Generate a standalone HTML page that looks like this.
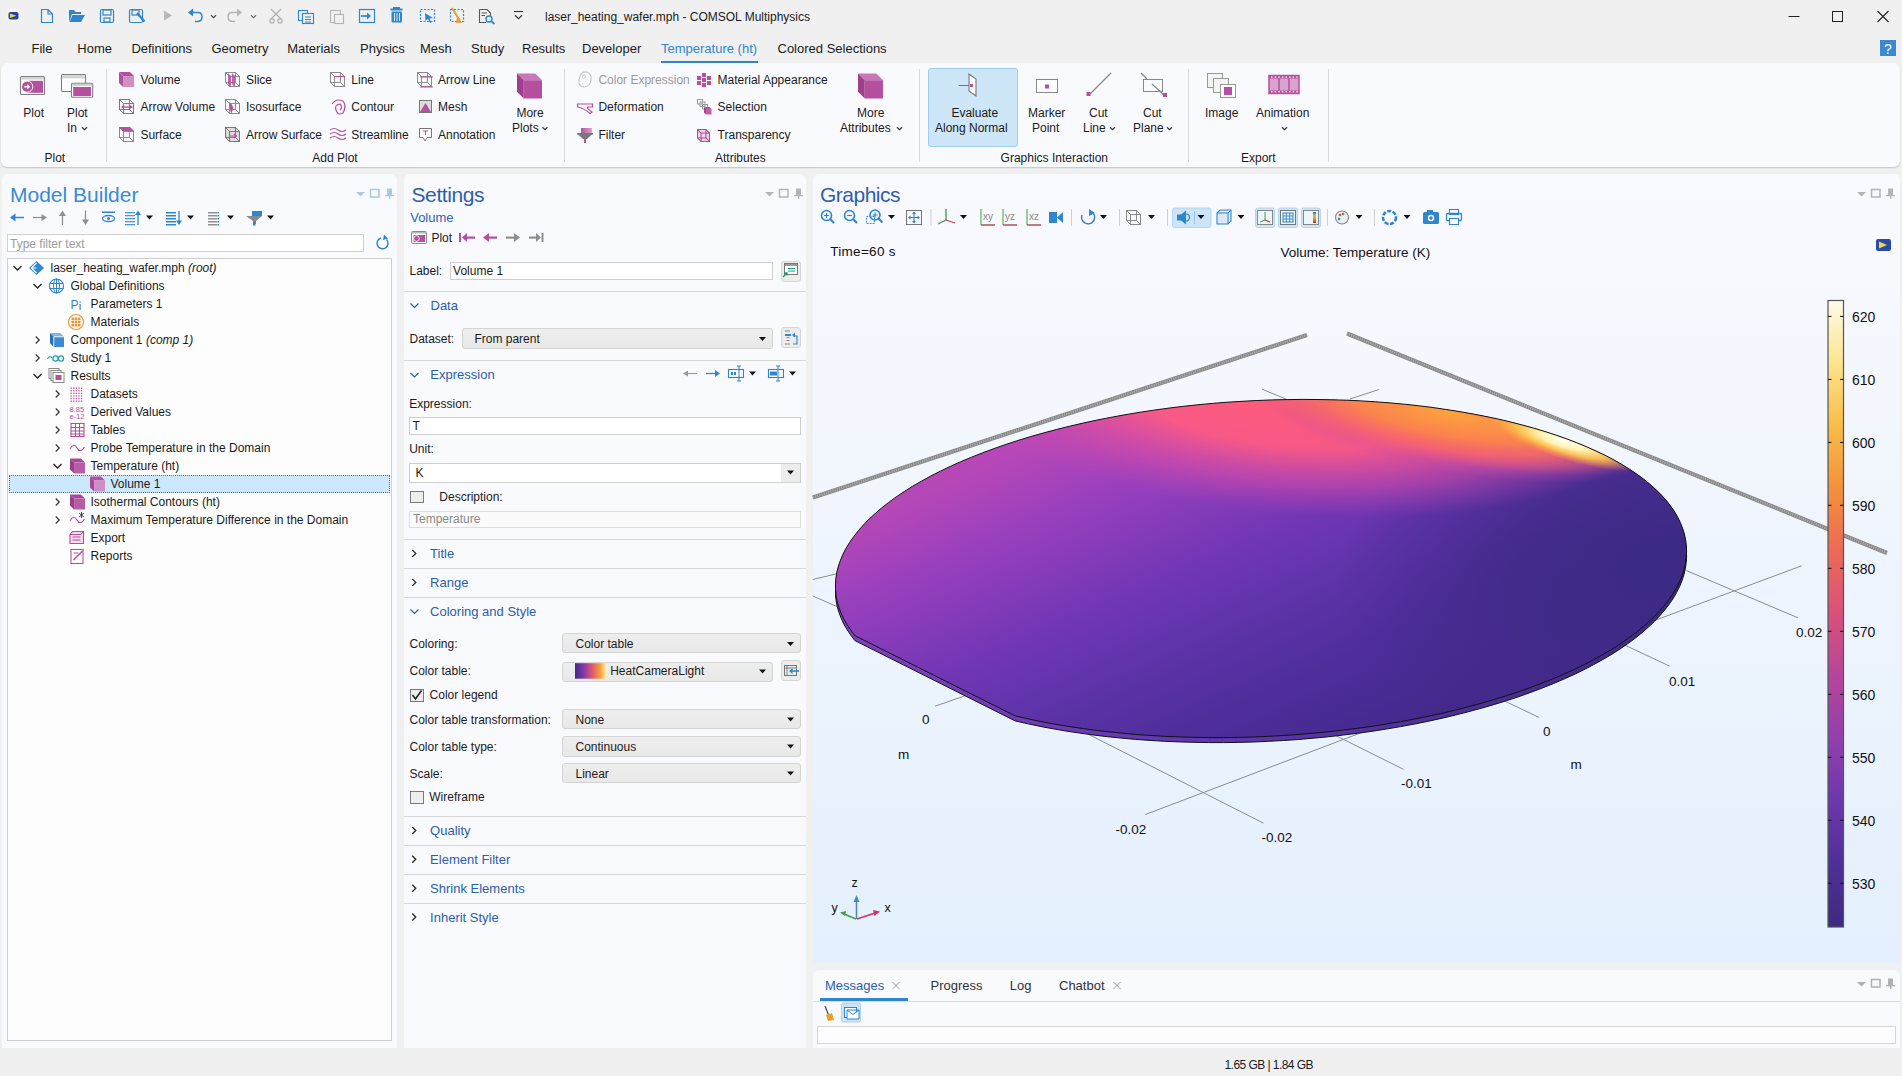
<!DOCTYPE html>
<html><head><meta charset="utf-8"><style>
html,body{margin:0;padding:0;}
body{width:1902px;height:1076px;overflow:hidden;position:relative;background:#f0f0f0;font-family:"Liberation Sans",sans-serif;}
.t{position:absolute;white-space:nowrap;}
.r{position:absolute;box-sizing:border-box;}
.s{position:absolute;overflow:visible;}
</style></head><body>
<div class="t" style="left:545.0px;top:11.1px;font-size:12px;line-height:12px;color:#1b1b1b;">laser_heating_wafer.mph - COMSOL Multiphysics</div>
<svg class="s" style="left:0px;top:0px;" width="30" height="30" viewBox="0 0 30 30"><circle cx="13.5" cy="15.5" r="7" fill="#f5f5f5"/><rect x="8.5" y="12" width="10" height="7.5" rx="2" fill="#2440a8"/><path d="M10,13.5 L16.5,15.8 L10,18 Z" fill="#e8d640"/></svg>
<svg class="s" style="left:0px;top:0px;" width="600" height="32" viewBox="0 0 600 32"><path d="M41.5,9.5 L48,9.5 L52.5,14 L52.5,22.5 L41.5,22.5 Z M48,9.5 L48,14 L52.5,14" fill="none" stroke="#2f86cc" stroke-width="1.2"/><path d="M69,10 L74,10 L75.5,12 L81,12 L81,14 L72,14 L69,22 Z" fill="#2f86cc"/><path d="M72.5,15 L85,15 L81,22 L69.5,22 Z" fill="#2f86cc"/><rect x="100.5" y="9.5" width="13" height="13" rx="1.5" fill="none" stroke="#2f86cc" stroke-width="1.2"/><rect x="103" y="10" width="8" height="5" fill="none" stroke="#2f86cc" stroke-width="1.2"/><rect x="104" y="18" width="6" height="4" fill="none" stroke="#2f86cc" stroke-width="1.2"/><rect x="129.5" y="9.5" width="13" height="13" rx="1.5" fill="none" stroke="#2f86cc" stroke-width="1.2"/><rect x="132" y="10" width="7" height="5" fill="none" stroke="#2f86cc" stroke-width="1.2"/><path d="M137,13 L144.5,21.5" stroke="#2f86cc" stroke-width="2.4"/><path d="M164,10.5 L172,15.5 L164,20.5 Z" fill="#b9b9b9"/><path d="M190,12.5 L198,12.5 Q202,12.5 202,17 Q202,21.5 197,21.5 L195,21.5" fill="none" stroke="#2f86cc" stroke-width="1.5"/><path d="M188,12.5 L193,8.5 L193,16.5 Z" fill="#2f86cc"/><path d="M211.0,15.25 L213.5,17.75 L216.0,15.25" fill="none" stroke="#444" stroke-width="1.1"/><path d="M240,12.5 L232,12.5 Q228,12.5 228,17 Q228,21.5 233,21.5 L235,21.5" fill="none" stroke="#b5b5b5" stroke-width="1.5"/><path d="M242,12.5 L237,8.5 L237,16.5 Z" fill="#b5b5b5"/><path d="M251.0,15.25 L253.5,17.75 L256.0,15.25" fill="none" stroke="#666" stroke-width="1.1"/><path d="M271,9 L281,19 M281,9 L271,19" stroke="#b0b0b0" stroke-width="1.3"/><circle cx="272" cy="21" r="2.2" fill="none" stroke="#b0b0b0" stroke-width="1.2"/><circle cx="280" cy="21" r="2.2" fill="none" stroke="#b0b0b0" stroke-width="1.2"/><rect x="298.5" y="10.5" width="9" height="10" fill="none" stroke="#2f86cc" stroke-width="1.1"/><rect x="302.5" y="13.5" width="11" height="10" fill="#f0f0f0" stroke="#2f86cc" stroke-width="1.1"/><path d="M305,17 L311,17 M305,19.5 L311,19.5 M305,22 L311,22" stroke="#2f86cc" stroke-width="1"/><rect x="330.5" y="10.5" width="10" height="12" fill="none" stroke="#b5b5b5" stroke-width="1.1"/><rect x="334.5" y="14.5" width="9" height="9" fill="#f0f0f0" stroke="#b5b5b5" stroke-width="1.1"/><rect x="359.5" y="9.5" width="15" height="13" fill="none" stroke="#2f86cc" stroke-width="1.2"/><path d="M361,16 L369,16" stroke="#2f86cc" stroke-width="1.8"/><path d="M367,12.5 L371,16 L367,19.5 Z" fill="#2f86cc"/><rect x="390.5" y="8.5" width="12" height="2" fill="#2f86cc"/><rect x="393" y="7" width="7" height="2" fill="#2f86cc"/><rect x="391.5" y="11.5" width="10.5" height="11" rx="1" fill="#2f86cc"/><path d="M394.5,13 L394.5,21 M397,13 L397,21 M399.5,13 L399.5,21" stroke="#f0f0f0" stroke-width="0.9"/><rect x="420.5" y="9.5" width="14" height="12" fill="none" stroke="#2f86cc" stroke-width="1.2" stroke-dasharray="2,1.5"/><path d="M425,13 L433,18 L429.5,18.5 L431.5,22.5 L430,23 L428,19 L425.5,21 Z" fill="#2f86cc"/><rect x="450.5" y="9.5" width="13" height="12" fill="none" stroke="#2f86cc" stroke-width="1.2" stroke-dasharray="2,1.5"/><path d="M452,8 L460,21" stroke="#e0a040" stroke-width="2"/><path d="M457,17 L462,23 L456,23 Z" fill="#e8a040"/><path d="M479.5,9.5 L487,9.5 L490.5,13 L490.5,17 M479.5,9.5 L479.5,22.5 L486,22.5" fill="none" stroke="#555" stroke-width="1.1"/><path d="M481.5,13 L487,13 M481.5,15.5 L485,15.5" stroke="#555" stroke-width="1"/><circle cx="489" cy="19" r="3" fill="none" stroke="#2f86cc" stroke-width="1.4"/><path d="M491,21 L494.5,24" stroke="#2f86cc" stroke-width="1.8"/><path d="M514,11.5 L523,11.5" stroke="#333" stroke-width="1.1"/><path d="M515.0,15.25 L518.5,18.75 L522.0,15.25" fill="none" stroke="#333" stroke-width="1.1"/></svg>
<svg class="s" style="left:1780px;top:0px;" width="122" height="32" viewBox="0 0 122 32"><path d="M8.5,16.5 L19.5,16.5" stroke="#222" stroke-width="1"/><rect x="52.5" y="11.5" width="10" height="10" fill="none" stroke="#222" stroke-width="1"/><path d="M97.5,11 L108.5,22 M108.5,11 L97.5,22" stroke="#222" stroke-width="1.1"/></svg>
<svg class="s" style="left:1879px;top:39px;" width="18" height="18" viewBox="0 0 18 18"><rect x="1" y="1" width="16" height="16" fill="#3b8ad0"/><text x="9" y="14.5" font-size="14" font-family="Liberation Sans" fill="#fff" text-anchor="middle">?</text></svg>
<div class="t" style="left:31.5px;top:41.8px;font-size:13px;line-height:13px;color:#1b1b1b;">File</div>
<div class="t" style="left:77.3px;top:41.8px;font-size:13px;line-height:13px;color:#1b1b1b;">Home</div>
<div class="t" style="left:131.4px;top:41.8px;font-size:13px;line-height:13px;color:#1b1b1b;">Definitions</div>
<div class="t" style="left:211.4px;top:41.8px;font-size:13px;line-height:13px;color:#1b1b1b;">Geometry</div>
<div class="t" style="left:287.2px;top:41.8px;font-size:13px;line-height:13px;color:#1b1b1b;">Materials</div>
<div class="t" style="left:360.0px;top:41.8px;font-size:13px;line-height:13px;color:#1b1b1b;">Physics</div>
<div class="t" style="left:420.0px;top:41.8px;font-size:13px;line-height:13px;color:#1b1b1b;">Mesh</div>
<div class="t" style="left:471.0px;top:41.8px;font-size:13px;line-height:13px;color:#1b1b1b;">Study</div>
<div class="t" style="left:522.0px;top:41.8px;font-size:13px;line-height:13px;color:#1b1b1b;">Results</div>
<div class="t" style="left:582.0px;top:41.8px;font-size:13px;line-height:13px;color:#1b1b1b;">Developer</div>
<div class="t" style="left:661.0px;top:41.8px;font-size:13px;line-height:13px;color:#2f86cc;">Temperature (ht)</div>
<div class="t" style="left:777.5px;top:41.8px;font-size:13px;line-height:13px;color:#1b1b1b;">Colored Selections</div>
<div class="r" style="left:661.0px;top:60.5px;width:97.0px;height:2.5px;background:#2f86cc"></div>
<div class="r" style="left:1.0px;top:63.0px;width:1898.5px;height:104.0px;background:#f9fafe;border-radius:6px;box-shadow:0 1px 1.5px rgba(0,0,0,0.18)"></div>
<div class="r" style="left:106.0px;top:69.0px;width:1.0px;height:93.0px;background:#d9d9d9"></div>
<div class="r" style="left:564.0px;top:69.0px;width:1.0px;height:93.0px;background:#d9d9d9"></div>
<div class="r" style="left:919.0px;top:69.0px;width:1.0px;height:93.0px;background:#d9d9d9"></div>
<div class="r" style="left:1188.0px;top:69.0px;width:1.0px;height:93.0px;background:#d9d9d9"></div>
<div class="r" style="left:1328.0px;top:69.0px;width:1.0px;height:93.0px;background:#d9d9d9"></div>
<div class="t" style="left:44.5px;top:151.5px;font-size:12px;line-height:12px;color:#1b1b1b;">Plot</div>
<div class="t" style="left:312.3px;top:151.5px;font-size:12px;line-height:12px;color:#1b1b1b;">Add Plot</div>
<div class="t" style="left:715.0px;top:151.5px;font-size:12px;line-height:12px;color:#1b1b1b;">Attributes</div>
<div class="t" style="left:1000.6px;top:151.5px;font-size:12px;line-height:12px;color:#1b1b1b;">Graphics Interaction</div>
<div class="t" style="left:1241.0px;top:151.5px;font-size:12px;line-height:12px;color:#1b1b1b;">Export</div>
<div class="t" style="left:23.3px;top:106.6px;font-size:12px;line-height:12px;color:#1b1b1b;">Plot</div>
<div class="t" style="left:67.0px;top:106.6px;font-size:12px;line-height:12px;color:#1b1b1b;">Plot</div>
<div class="t" style="left:67.0px;top:121.6px;font-size:12px;line-height:12px;color:#1b1b1b;">In</div>
<div class="t" style="left:516.4px;top:106.6px;font-size:12px;line-height:12px;color:#1b1b1b;">More</div>
<div class="t" style="left:512.0px;top:121.6px;font-size:12px;line-height:12px;color:#1b1b1b;">Plots</div>
<div class="t" style="left:857.0px;top:106.6px;font-size:12px;line-height:12px;color:#1b1b1b;">More</div>
<div class="t" style="left:840.0px;top:121.6px;font-size:12px;line-height:12px;color:#1b1b1b;">Attributes</div>
<div class="r" style="left:927.5px;top:67.5px;width:90.5px;height:79.0px;background:#cde6f8;border:1px solid #9fcdf0;border-radius:3px"></div>
<div class="t" style="left:951.4px;top:106.8px;font-size:12px;line-height:12px;color:#1b1b1b;">Evaluate</div>
<div class="t" style="left:935.0px;top:121.6px;font-size:12px;line-height:12px;color:#1b1b1b;">Along Normal</div>
<div class="t" style="left:1028.0px;top:106.8px;font-size:12px;line-height:12px;color:#1b1b1b;">Marker</div>
<div class="t" style="left:1032.0px;top:121.6px;font-size:12px;line-height:12px;color:#1b1b1b;">Point</div>
<div class="t" style="left:1089.0px;top:106.8px;font-size:12px;line-height:12px;color:#1b1b1b;">Cut</div>
<div class="t" style="left:1083.0px;top:121.6px;font-size:12px;line-height:12px;color:#1b1b1b;">Line</div>
<div class="t" style="left:1143.0px;top:106.8px;font-size:12px;line-height:12px;color:#1b1b1b;">Cut</div>
<div class="t" style="left:1133.0px;top:121.6px;font-size:12px;line-height:12px;color:#1b1b1b;">Plane</div>
<div class="t" style="left:1205.0px;top:106.8px;font-size:12px;line-height:12px;color:#1b1b1b;">Image</div>
<div class="t" style="left:1256.0px;top:106.8px;font-size:12px;line-height:12px;color:#1b1b1b;">Animation</div>
<div class="t" style="left:140.4px;top:73.8px;font-size:12px;line-height:12px;color:#1b1b1b;">Volume</div>
<div class="t" style="left:140.4px;top:100.6px;font-size:12px;line-height:12px;color:#1b1b1b;">Arrow Volume</div>
<div class="t" style="left:140.4px;top:129.2px;font-size:12px;line-height:12px;color:#1b1b1b;">Surface</div>
<div class="t" style="left:246.0px;top:73.8px;font-size:12px;line-height:12px;color:#1b1b1b;">Slice</div>
<div class="t" style="left:246.0px;top:100.6px;font-size:12px;line-height:12px;color:#1b1b1b;">Isosurface</div>
<div class="t" style="left:246.0px;top:129.2px;font-size:12px;line-height:12px;color:#1b1b1b;">Arrow Surface</div>
<div class="t" style="left:351.3px;top:73.8px;font-size:12px;line-height:12px;color:#1b1b1b;">Line</div>
<div class="t" style="left:351.3px;top:100.6px;font-size:12px;line-height:12px;color:#1b1b1b;">Contour</div>
<div class="t" style="left:351.3px;top:129.2px;font-size:12px;line-height:12px;color:#1b1b1b;">Streamline</div>
<div class="t" style="left:438.0px;top:73.8px;font-size:12px;line-height:12px;color:#1b1b1b;">Arrow Line</div>
<div class="t" style="left:438.0px;top:100.6px;font-size:12px;line-height:12px;color:#1b1b1b;">Mesh</div>
<div class="t" style="left:438.0px;top:129.2px;font-size:12px;line-height:12px;color:#1b1b1b;">Annotation</div>
<div class="t" style="left:717.6px;top:73.8px;font-size:12px;line-height:12px;color:#1b1b1b;">Material Appearance</div>
<div class="t" style="left:717.6px;top:100.6px;font-size:12px;line-height:12px;color:#1b1b1b;">Selection</div>
<div class="t" style="left:717.6px;top:129.2px;font-size:12px;line-height:12px;color:#1b1b1b;">Transparency</div>
<div class="t" style="left:598.4px;top:100.6px;font-size:12px;line-height:12px;color:#1b1b1b;">Deformation</div>
<div class="t" style="left:598.4px;top:129.2px;font-size:12px;line-height:12px;color:#1b1b1b;">Filter</div>
<div class="t" style="left:598.4px;top:73.8px;font-size:12px;line-height:12px;color:#9a9a9a;">Color Expression</div>
<svg class="s" style="left:0px;top:0px;" width="1400" height="170" viewBox="0 0 1400 170"><path d="M82.0,127.25 L84.5,129.75 L87.0,127.25" fill="none" stroke="#333" stroke-width="1.2"/><path d="M542.5,127.25 L545,129.75 L547.5,127.25" fill="none" stroke="#333" stroke-width="1.2"/><path d="M897.0,127.25 L899.5,129.75 L902.0,127.25" fill="none" stroke="#333" stroke-width="1.2"/><path d="M1110.0,127.25 L1112.5,129.75 L1115.0,127.25" fill="none" stroke="#333" stroke-width="1.2"/><path d="M1167.0,127.25 L1169.5,129.75 L1172.0,127.25" fill="none" stroke="#333" stroke-width="1.2"/><path d="M1282.0,127.25 L1284.5,129.75 L1287.0,127.25" fill="none" stroke="#333" stroke-width="1.2"/><rect x="20.5" y="76.5" width="24" height="18" rx="1" fill="#fff" stroke="#808080" stroke-width="1.1"/><rect x="21.2" y="77.2" width="22.6" height="2.3" fill="#d2d2d2"/><rect x="27" y="80.8" width="16" height="12" fill="#b4509e"/><circle cx="27.2" cy="86.7" r="5.6" fill="#b4509e" stroke="#fff" stroke-width="1"/><path d="M24.3,86.7 L28.6,86.7" stroke="#fff" stroke-width="1.6"/><path d="M27.4,84 L30.3,86.7 L27.4,89.4 Z" fill="#fff"/><rect x="61.5" y="74.5" width="24" height="17" rx="1" fill="#fff" stroke="#808080" stroke-width="1.1"/><rect x="62.2" y="75.2" width="22.6" height="3.2" fill="#d2d2d2"/><rect x="71.5" y="83.3" width="21.2" height="14" rx="1" fill="#fff" stroke="#808080" stroke-width="1.1"/><rect x="72.2" y="84" width="19.8" height="2" fill="#d2d2d2"/><rect x="73.2" y="87" width="17.8" height="9" fill="#b4509e"/><path d="M517,73.5 L535.25,73.5 L542,80.25 L523.75,80.25 Z" fill="#c878b8"/><path d="M517,73.5 L523.75,80.25 L523.75,98.5 L517,91.75 Z" fill="#9e3f8c"/><rect x="523.75" y="80.25" width="18.25" height="18.25" fill="#b4509e"/><path d="M858,73.5 L876.25,73.5 L883,80.25 L864.75,80.25 Z" fill="#c878b8"/><path d="M858,73.5 L864.75,80.25 L864.75,98.5 L858,91.75 Z" fill="#9e3f8c"/><rect x="864.75" y="80.25" width="18.25" height="18.25" fill="#b4509e"/><path d="M119,72 L129.95,72 L134,76.05 L123.05,76.05 Z" fill="#b4509e"/><path d="M119,72 L123.05,76.05 L123.05,87 L119,82.95 Z" fill="#b4509e"/><rect x="123.05" y="76.05" width="10.95" height="10.95" fill="#cf8fc3"/><g fill="none" stroke="#7a7a7a" stroke-width="1"><rect x="119.5" y="99.5" width="9.95" height="9.95"/><rect x="123.55" y="103.55" width="9.95" height="9.95"/><path d="M119.5,99.5 L123.55,103.55 M129.45,99.5 L133.5,103.55 M119.5,109.45 L123.55,113.5 M129.45,109.45 L133.5,113.5"/></g><path d="M122,107 L132,107" stroke="#b4509e" stroke-width="1.3"/><path d="M121,107 L124,105 L124,109 Z M133,107 L130,105 L130,109 Z" fill="#b4509e"/><g fill="none" stroke="#8a8a8a" stroke-width="1"><rect x="119.5" y="127.5" width="9.95" height="9.95"/><rect x="123.55" y="131.55" width="9.95" height="9.95"/><path d="M119.5,127.5 L123.55,131.55 M129.45,127.5 L133.5,131.55 M119.5,137.45 L123.55,141.5 M129.45,137.45 L133.5,141.5"/></g><path d="M119,127 L130,127 L134,131 L123,131 Z" fill="#b4509e"/><g fill="none" stroke="#8a8a8a" stroke-width="1"><rect x="225.5" y="72.5" width="9.95" height="9.95"/><rect x="229.55" y="76.55" width="9.95" height="9.95"/><path d="M225.5,72.5 L229.55,76.55 M235.45,72.5 L239.5,76.55 M225.5,82.45 L229.55,86.5 M235.45,82.45 L239.5,86.5"/></g><path d="M228,73 L231,76 L231,87 L228,84 Z M232,73 L235,76 L235,87 L232,84 Z" fill="#b4509e" opacity="0.85"/><g fill="none" stroke="#8a8a8a" stroke-width="1"><rect x="225.5" y="99.5" width="9.95" height="9.95"/><rect x="229.55" y="103.55" width="9.95" height="9.95"/><path d="M225.5,99.5 L229.55,103.55 M235.45,99.5 L239.5,103.55 M225.5,109.45 L229.55,113.5 M235.45,109.45 L239.5,113.5"/></g><path d="M229,102 Q236,106 231,114 Z" fill="#b4509e"/><path d="M225,127 L236,127 L240,131 L240,142 L229,142 L225,138 Z" fill="#dedede"/><g fill="none" stroke="#777" stroke-width="1"><rect x="225.5" y="127.5" width="9.95" height="9.95"/><rect x="229.55" y="131.55" width="9.95" height="9.95"/><path d="M225.5,127.5 L229.55,131.55 M235.45,127.5 L239.5,131.55 M225.5,137.45 L229.55,141.5 M235.45,137.45 L239.5,141.5"/></g><path d="M230,136 L236,136 M234,134 L236.5,136 L234,138" stroke="#b4509e" stroke-width="1.2" fill="none"/><g fill="none" stroke="#8a8a8a" stroke-width="1"><rect x="330.5" y="72.5" width="9.95" height="9.95"/><rect x="334.55" y="76.55" width="9.95" height="9.95"/><path d="M330.5,72.5 L334.55,76.55 M340.45,72.5 L344.5,76.55 M330.5,82.45 L334.55,86.5 M340.45,82.45 L344.5,86.5"/></g><path d="M334,76.5 L345,76.5" stroke="#b4509e" stroke-width="1.2"/><path d="M332,104 Q336,98 343,101 Q347,106 343,113 Q338,116 336,110 Q334,105 340,104 Q343,107 340,110" fill="none" stroke="#b4509e" stroke-width="1.2"/><path d="M330,130 Q334,127 338,130 Q342,133 346,130 M330,134 Q334,131 338,134 Q342,137 346,134 M330,138 Q334,135 338,138 Q342,141 346,138" fill="none" stroke="#b4509e" stroke-width="1.2"/><g fill="none" stroke="#8a8a8a" stroke-width="1"><rect x="417.5" y="72.5" width="9.95" height="9.95"/><rect x="421.55" y="76.55" width="9.95" height="9.95"/><path d="M417.5,72.5 L421.55,76.55 M427.45,72.5 L431.5,76.55 M417.5,82.45 L421.55,86.5 M427.45,82.45 L431.5,86.5"/></g><path d="M420,77 L433,77 M420,87 L433,87" stroke="#b4509e" stroke-width="1.1"/><rect x="419.5" y="100.5" width="12" height="12" fill="#ddd" stroke="#777"/><path d="M420,112 L425.5,103 L431,112 Z" fill="#b4509e"/><path d="M419.5,128.5 L431.5,128.5 L431.5,137.5 L427,137.5 L425,141 L423,137.5 L419.5,137.5 Z" fill="#fff" stroke="#777"/><path d="M423,131 L428,131 M425.5,131 L425.5,135" stroke="#b4509e" stroke-width="1.1"/><path d="M580,76 Q582,71 587,72 Q592,74 591,80 Q590,86 585,87 Q579,87 579,82 Q579,79 580,76 Z" fill="none" stroke="#c9c9c9" stroke-width="1.2"/><circle cx="584" cy="76.5" r="1.6" fill="none" stroke="#c9c9c9"/><path d="M582,84 L588,79" stroke="#c9c9c9" stroke-width="0.9" stroke-dasharray="1,1"/><path d="M577.5,104 L592.5,104 L592.5,107 L588,107 Q586,108 592,112 L590,113.5 Q584,108 577.5,107 Z" fill="none" stroke="#b4509e" stroke-width="1.2"/><defs><linearGradient id="flt" x1="0" x2="1"><stop offset="0" stop-color="#b4509e"/><stop offset="1" stop-color="#dba8d0"/></linearGradient></defs><rect x="581" y="128" width="11" height="5" fill="url(#flt)"/><path d="M577,133.5 L593,133.5 L587,139 L583,139 Z" fill="#787878"/><rect x="577" y="133" width="16" height="1.6" fill="#787878"/><rect x="584" y="139" width="2" height="4" fill="#b4509e"/><rect x="697" y="76" width="4" height="4" fill="#b4509e"/><rect x="697" y="81" width="4" height="4" fill="#b4509e"/><rect x="702" y="73" width="4" height="4" fill="#b4509e"/><rect x="702" y="78" width="4" height="4" fill="#b4509e"/><rect x="702" y="83" width="4" height="4" fill="#b4509e"/><rect x="707" y="76" width="4" height="4" fill="#b4509e"/><rect x="707" y="81" width="4" height="4" fill="#b4509e"/><g fill="none" stroke="#9a9a9a" stroke-width="1"><rect x="697.5" y="99.5" width="5" height="4.5"/><rect x="700" y="102" width="5" height="4.5"/><rect x="702.5" y="104.5" width="5" height="4.5"/></g><path d="M704,107 L709.475,107 L711.5,109.025 L706.025,109.025 Z" fill="#b4509e"/><path d="M704,107 L706.025,109.025 L706.025,114.5 L704,112.475 Z" fill="#9e3f8c"/><rect x="706.025" y="109.025" width="5.475" height="5.475" fill="#c060aa"/><path d="M697.5,129.5 L706,129.5 L709.5,133 L709.5,141.5 L701,141.5 L697.5,138 Z" fill="#f2dcea"/><g fill="none" stroke="#b4509e" stroke-width="1.1"><rect x="697.55" y="129.55" width="8.39" height="8.39"/><rect x="701.06" y="133.06" width="8.39" height="8.39"/><path d="M697.55,129.55 L701.06,133.06 M705.94,129.55 L709.45,133.06 M697.55,137.94 L701.06,141.45 M705.94,137.94 L709.45,141.45"/></g><path d="M958.5,85.5 L971,85.5" stroke="#777" stroke-width="1"/><path d="M969,74 L976,79 L976,96 L969,91 Z" fill="#fff" stroke="#777" stroke-width="1.1"/><rect x="970" y="84" width="3" height="3" fill="#b4509e"/><rect x="1036.5" y="79.5" width="21" height="13" fill="#fff" stroke="#888"/><rect x="1045" y="84.5" width="4" height="4" fill="#b4509e"/><path d="M1089,95 L1111,73" stroke="#888" stroke-width="1.2"/><rect x="1086.5" y="92" width="4" height="4" fill="#b4509e"/><path d="M1141,73 L1147,79" stroke="#888" stroke-width="1.2"/><rect x="1143.5" y="79.5" width="19" height="12" fill="none" stroke="#888"/><path d="M1152,84 L1164,95" stroke="#888" stroke-width="1.2"/><rect x="1163" y="93" width="4" height="4" fill="#b4509e"/><rect x="1207.5" y="73.5" width="15" height="14" fill="#f4f4f4" stroke="#999"/><rect x="1213.5" y="78.5" width="15" height="14" fill="#f4f4f4" stroke="#999"/><rect x="1220.5" y="84.5" width="15" height="13" fill="#fff" stroke="#999"/><rect x="1224" y="87" width="8" height="8" fill="#b4509e"/><rect x="1269" y="75.5" width="30" height="18" fill="#d9a3cf"/><rect x="1269" y="75.5" width="30" height="3" fill="#b4509e"/><rect x="1269" y="90.5" width="30" height="3" fill="#b4509e"/><path d="M1279,78 L1279,91 M1289,78 L1289,91" stroke="#b4509e" stroke-width="1.5"/><rect x="1269" y="75.5" width="30" height="18" fill="none" stroke="#b4509e" stroke-width="1.5"/><rect x="1271.0" y="76.5" width="1.6" height="1.2" fill="#fff"/><rect x="1271.0" y="91.2" width="1.6" height="1.2" fill="#fff"/><rect x="1274.6" y="76.5" width="1.6" height="1.2" fill="#fff"/><rect x="1274.6" y="91.2" width="1.6" height="1.2" fill="#fff"/><rect x="1278.2" y="76.5" width="1.6" height="1.2" fill="#fff"/><rect x="1278.2" y="91.2" width="1.6" height="1.2" fill="#fff"/><rect x="1281.8" y="76.5" width="1.6" height="1.2" fill="#fff"/><rect x="1281.8" y="91.2" width="1.6" height="1.2" fill="#fff"/><rect x="1285.4" y="76.5" width="1.6" height="1.2" fill="#fff"/><rect x="1285.4" y="91.2" width="1.6" height="1.2" fill="#fff"/><rect x="1289.0" y="76.5" width="1.6" height="1.2" fill="#fff"/><rect x="1289.0" y="91.2" width="1.6" height="1.2" fill="#fff"/><rect x="1292.6" y="76.5" width="1.6" height="1.2" fill="#fff"/><rect x="1292.6" y="91.2" width="1.6" height="1.2" fill="#fff"/><rect x="1296.2" y="76.5" width="1.6" height="1.2" fill="#fff"/><rect x="1296.2" y="91.2" width="1.6" height="1.2" fill="#fff"/></svg>
<div class="r" style="left:2.0px;top:174.0px;width:395.0px;height:874.0px;background:#f9fafe;border-radius:6px 6px 0 0"></div>
<div class="t" style="left:10.0px;top:184.0px;font-size:21px;line-height:21px;color:#3a8ad4;">Model Builder</div>
<svg class="s" style="left:0px;top:0px;" width="400" height="260" viewBox="0 0 400 260"><path d="M356,192 L365,192 L360.5,196.5 Z" fill="#a9c9e6"/><rect x="370.5" y="189.5" width="8.5" height="7.5" fill="none" stroke="#a9c9e6" stroke-width="1.5"/><rect x="387" y="188.5" width="5" height="6.5" fill="#a9c9e6"/><rect x="385" y="195" width="9" height="1.3" fill="#a9c9e6"/><rect x="389" y="195" width="1.3" height="4" fill="#a9c9e6"/><path d="M11,217.5 L24,217.5" stroke="#2f86cc" stroke-width="1.5"/><path d="M10,217.5 L15.5,213.5 L15.5,221.5 Z" fill="#2f86cc"/><path d="M33,217.5 L46,217.5" stroke="#8f8f8f" stroke-width="1.2"/><path d="M47,217.5 L41.5,214 L41.5,221 Z" fill="#8f8f8f"/><path d="M62.5,212 L62.5,225" stroke="#8f8f8f" stroke-width="1.2"/><path d="M62.5,210.5 L59,216 L66,216 Z" fill="#8f8f8f"/><path d="M85.5,210.5 L85.5,223" stroke="#8f8f8f" stroke-width="1.2"/><path d="M85.5,225 L82,219.5 L89,219.5 Z" fill="#8f8f8f"/><rect x="102" y="211.5" width="13" height="1.5" fill="#2f86cc"/><ellipse cx="108.5" cy="218.5" rx="6" ry="3" fill="none" stroke="#2f86cc" stroke-width="1.3"/><circle cx="108.5" cy="218.5" r="1.5" fill="#2f86cc"/><rect x="125" y="212" width="10" height="1.3" fill="#2f86cc" opacity="0.85"/><rect x="125" y="215" width="10" height="1.3" fill="#2f86cc" opacity="0.85"/><rect x="125" y="218" width="10" height="1.3" fill="#2f86cc" opacity="0.85"/><rect x="125" y="221" width="10" height="1.3" fill="#2f86cc" opacity="0.85"/><rect x="125" y="224" width="10" height="1.3" fill="#2f86cc" opacity="0.85"/><path d="M138,212 L138,225" stroke="#2f86cc" stroke-width="1.3"/><path d="M138,210.5 L135,215 L141,215 Z" fill="#2f86cc"/><path d="M146.0,215.5 L153.0,215.5 L149.5,219.5 Z" fill="#111"/><rect x="166" y="212" width="10" height="1.5" fill="#2f86cc"/><rect x="166" y="215" width="10" height="1.5" fill="#2f86cc"/><rect x="166" y="218" width="10" height="1.5" fill="#2f86cc"/><rect x="166" y="221" width="10" height="1.5" fill="#2f86cc"/><rect x="166" y="224" width="10" height="1.5" fill="#2f86cc"/><path d="M179,211 L179,223" stroke="#2f86cc" stroke-width="1.3"/><path d="M179,225 L176,220.5 L182,220.5 Z" fill="#2f86cc"/><path d="M187.0,215.5 L194.0,215.5 L190.5,219.5 Z" fill="#111"/><rect x="208" y="212" width="9" height="1.5" fill="#8f8f8f"/><rect x="217.5" y="212" width="1.5" height="1.5" fill="#2f86cc"/><rect x="208" y="215" width="9" height="1.5" fill="#8f8f8f"/><rect x="217.5" y="215" width="1.5" height="1.5" fill="#2f86cc"/><rect x="208" y="218" width="9" height="1.5" fill="#8f8f8f"/><rect x="217.5" y="218" width="1.5" height="1.5" fill="#2f86cc"/><rect x="208" y="221" width="9" height="1.5" fill="#8f8f8f"/><rect x="217.5" y="221" width="1.5" height="1.5" fill="#2f86cc"/><rect x="208" y="224" width="9" height="1.5" fill="#8f8f8f"/><rect x="217.5" y="224" width="1.5" height="1.5" fill="#2f86cc"/><path d="M227.0,215.5 L234.0,215.5 L230.5,219.5 Z" fill="#111"/><rect x="252" y="211" width="10" height="5" fill="#2f86cc"/><path d="M246,216 L262,216 L256,221 L256,224 L253,224 L253,221 Z" fill="#8a8a8a"/><rect x="253" y="221.5" width="2.5" height="4" fill="#2f86cc"/><path d="M267.0,215.5 L274.0,215.5 L270.5,219.5 Z" fill="#111"/><path d="M386.5,239.5 A5.5,5.5 0 1 1 381,238" fill="none" stroke="#2f86cc" stroke-width="1.5"/><path d="M384,234.5 L388,238.5 L383,240 Z" fill="#2f86cc"/></svg>
<div class="r" style="left:7.0px;top:234.0px;width:357.0px;height:18.0px;background:#fff;border:1px solid #d0d0d0"></div>
<div class="t" style="left:10.0px;top:237.8px;font-size:12px;line-height:12px;color:#9c9c9c;">Type filter text</div>
<div class="r" style="left:7.0px;top:258.0px;width:385.0px;height:782.6px;background:#fdfdfd;border:1px solid #cfcfcf"></div>
<div class="r" style="left:9.0px;top:475.0px;width:381.0px;height:18.0px;background:#cce8ff;border:1px dotted #4a6a8a"></div>
<div class="t" style="left:50.5px;top:261.6px;font-size:12px;line-height:12px;color:#1b1b1b;">laser_heating_wafer.mph <i>(root)</i></div>
<div class="t" style="left:70.5px;top:279.6px;font-size:12px;line-height:12px;color:#1b1b1b;">Global Definitions</div>
<div class="t" style="left:90.5px;top:297.6px;font-size:12px;line-height:12px;color:#1b1b1b;">Parameters 1</div>
<div class="t" style="left:90.5px;top:315.6px;font-size:12px;line-height:12px;color:#1b1b1b;">Materials</div>
<div class="t" style="left:70.5px;top:333.6px;font-size:12px;line-height:12px;color:#1b1b1b;">Component 1 <i>(comp 1)</i></div>
<div class="t" style="left:70.5px;top:351.6px;font-size:12px;line-height:12px;color:#1b1b1b;">Study 1</div>
<div class="t" style="left:70.5px;top:369.6px;font-size:12px;line-height:12px;color:#1b1b1b;">Results</div>
<div class="t" style="left:90.5px;top:387.6px;font-size:12px;line-height:12px;color:#1b1b1b;">Datasets</div>
<div class="t" style="left:90.5px;top:405.6px;font-size:12px;line-height:12px;color:#1b1b1b;">Derived Values</div>
<div class="t" style="left:90.5px;top:423.6px;font-size:12px;line-height:12px;color:#1b1b1b;">Tables</div>
<div class="t" style="left:90.5px;top:441.6px;font-size:12px;line-height:12px;color:#1b1b1b;">Probe Temperature in the Domain</div>
<div class="t" style="left:90.5px;top:459.6px;font-size:12px;line-height:12px;color:#1b1b1b;">Temperature (ht)</div>
<div class="t" style="left:110.5px;top:477.6px;font-size:12px;line-height:12px;color:#1b1b1b;">Volume 1</div>
<div class="t" style="left:90.5px;top:495.6px;font-size:12px;line-height:12px;color:#1b1b1b;">Isothermal Contours (ht)</div>
<div class="t" style="left:90.5px;top:513.6px;font-size:12px;line-height:12px;color:#1b1b1b;">Maximum Temperature Difference in the Domain</div>
<div class="t" style="left:90.5px;top:531.6px;font-size:12px;line-height:12px;color:#1b1b1b;">Export</div>
<div class="t" style="left:90.5px;top:549.6px;font-size:12px;line-height:12px;color:#1b1b1b;">Reports</div>
<svg class="s" style="left:0px;top:0px;" width="400" height="580" viewBox="0 0 400 580"><path d="M13.5,266.0 L17.5,270.0 L21.5,266.0" fill="none" stroke="#222" stroke-width="1.3"/><path d="M29.0,268 L36.5,261 L44.0,268 L36.5,275 Z" fill="#2f86cc"/><path d="M36.5,263 L31.5,268 L36.5,273" fill="none" stroke="#fff" stroke-width="1.2"/><path d="M31.5,268 L36.5,268" stroke="#fff" stroke-width="1"/><path d="M33.5,284.0 L37.5,288.0 L41.5,284.0" fill="none" stroke="#222" stroke-width="1.3"/><circle cx="56.5" cy="286" r="7" fill="none" stroke="#2f86cc" stroke-width="1.2"/><ellipse cx="56.5" cy="286" rx="3" ry="7" fill="none" stroke="#2f86cc" stroke-width="1"/><path d="M49.5,283.5 L63.5,283.5 M49.5,288.5 L63.5,288.5 M56.5,279 L56.5,293" stroke="#2f86cc" stroke-width="1"/><text x="70.5" y="309" font-size="12" font-family="Liberation Sans" fill="#2f86cc">P</text><rect x="79.5" y="304" width="1.2" height="6" fill="#2f86cc"/><rect x="79.5" y="301.5" width="1.2" height="1.3" fill="#2f86cc"/><circle cx="76.0" cy="322" r="7.5" fill="none" stroke="#e49a3a" stroke-width="1.2"/><rect x="71.5" y="317.5" width="2.6" height="2.6" fill="#e49a3a"/><rect x="71.5" y="320.7" width="2.6" height="2.6" fill="#e49a3a"/><rect x="71.5" y="323.9" width="2.6" height="2.6" fill="#e49a3a"/><rect x="74.7" y="317.5" width="2.6" height="2.6" fill="#e49a3a"/><rect x="74.7" y="320.7" width="2.6" height="2.6" fill="#e49a3a"/><rect x="74.7" y="323.9" width="2.6" height="2.6" fill="#e49a3a"/><rect x="77.9" y="317.5" width="2.6" height="2.6" fill="#e49a3a"/><rect x="77.9" y="320.7" width="2.6" height="2.6" fill="#e49a3a"/><rect x="77.9" y="323.9" width="2.6" height="2.6" fill="#e49a3a"/><path d="M35.75,336.5 L39.25,340 L35.75,343.5" fill="none" stroke="#333" stroke-width="1.2"/><path d="M50.0,333 L60.22,333 L64.0,336.78 L53.78,336.78 Z" fill="#7fb6e6"/><path d="M50.0,333 L53.78,336.78 L53.78,347 L50.0,343.22 Z" fill="#2a6fb8"/><rect x="53.78" y="336.78" width="10.219999999999999" height="10.219999999999999" fill="#3a8ad4"/><path d="M53.8,336.8 L64.0,336.8 M53.8,336.8 L53.8,347" stroke="#fff" stroke-width="0.8"/><path d="M35.75,354.5 L39.25,358 L35.75,361.5" fill="none" stroke="#333" stroke-width="1.2"/><path d="M47.5,359 Q49.5,355 52.0,358" fill="none" stroke="#20a0b0" stroke-width="1.2"/><circle cx="55.5" cy="358.5" r="2.6" fill="none" stroke="#20a0b0" stroke-width="1.2"/><circle cx="61.0" cy="358.5" r="2.6" fill="none" stroke="#20a0b0" stroke-width="1.2"/><path d="M33.5,374.0 L37.5,378.0 L41.5,374.0" fill="none" stroke="#222" stroke-width="1.3"/><rect x="49.0" y="368.5" width="10" height="10" fill="#fff" stroke="#888"/><rect x="51.0" y="370.5" width="10" height="10" fill="#fff" stroke="#888"/><rect x="53.0" y="372.5" width="11" height="10" fill="#fff" stroke="#888"/><rect x="55.5" y="375" width="6" height="5" fill="#b4509e"/><path d="M55.75,390.5 L59.25,394 L55.75,397.5" fill="none" stroke="#333" stroke-width="1.2"/><rect x="70.5" y="387.5" width="1.3" height="1.3" fill="#b4509e"/><rect x="70.5" y="390.1" width="1.3" height="1.3" fill="#b4509e"/><rect x="70.5" y="392.7" width="1.3" height="1.3" fill="#b4509e"/><rect x="70.5" y="395.3" width="1.3" height="1.3" fill="#b4509e"/><rect x="70.5" y="397.9" width="1.3" height="1.3" fill="#b4509e"/><rect x="70.5" y="400.5" width="1.3" height="1.3" fill="#b4509e"/><rect x="73.1" y="387.5" width="1.3" height="1.3" fill="#b4509e"/><rect x="73.1" y="390.1" width="1.3" height="1.3" fill="#b4509e"/><rect x="73.1" y="392.7" width="1.3" height="1.3" fill="#b4509e"/><rect x="73.1" y="395.3" width="1.3" height="1.3" fill="#b4509e"/><rect x="73.1" y="397.9" width="1.3" height="1.3" fill="#b4509e"/><rect x="73.1" y="400.5" width="1.3" height="1.3" fill="#b4509e"/><rect x="75.7" y="387.5" width="1.3" height="1.3" fill="#b4509e"/><rect x="75.7" y="390.1" width="1.3" height="1.3" fill="#b4509e"/><rect x="75.7" y="392.7" width="1.3" height="1.3" fill="#b4509e"/><rect x="75.7" y="395.3" width="1.3" height="1.3" fill="#b4509e"/><rect x="75.7" y="397.9" width="1.3" height="1.3" fill="#b4509e"/><rect x="75.7" y="400.5" width="1.3" height="1.3" fill="#b4509e"/><rect x="78.3" y="387.5" width="1.3" height="1.3" fill="#b4509e"/><rect x="78.3" y="390.1" width="1.3" height="1.3" fill="#b4509e"/><rect x="78.3" y="392.7" width="1.3" height="1.3" fill="#b4509e"/><rect x="78.3" y="395.3" width="1.3" height="1.3" fill="#b4509e"/><rect x="78.3" y="397.9" width="1.3" height="1.3" fill="#b4509e"/><rect x="78.3" y="400.5" width="1.3" height="1.3" fill="#b4509e"/><rect x="80.9" y="387.5" width="1.3" height="1.3" fill="#b4509e"/><rect x="80.9" y="390.1" width="1.3" height="1.3" fill="#b4509e"/><rect x="80.9" y="392.7" width="1.3" height="1.3" fill="#b4509e"/><rect x="80.9" y="395.3" width="1.3" height="1.3" fill="#b4509e"/><rect x="80.9" y="397.9" width="1.3" height="1.3" fill="#b4509e"/><rect x="80.9" y="400.5" width="1.3" height="1.3" fill="#b4509e"/><path d="M55.75,408.5 L59.25,412 L55.75,415.5" fill="none" stroke="#333" stroke-width="1.2"/><text x="69.5" y="411.5" font-size="7.5" font-family="Liberation Sans" fill="#b4509e">8.85</text><text x="69.5" y="418.5" font-size="7.5" font-family="Liberation Sans" fill="#b4509e">e-12</text><path d="M55.75,426.5 L59.25,430 L55.75,433.5" fill="none" stroke="#333" stroke-width="1.2"/><rect x="71.0" y="423.5" width="13" height="13" fill="none" stroke="#b4509e" stroke-width="1.1"/><path d="M71.0,427.5 L84.0,427.5 M71.0,431 L84.0,431 M71.0,434 L84.0,434 M75.5,423.5 L75.5,436.5 M79.5,423.5 L79.5,436.5" stroke="#b4509e" stroke-width="1"/><path d="M55.75,444.5 L59.25,448 L55.75,451.5" fill="none" stroke="#333" stroke-width="1.2"/><path d="M70.0,449 Q73.5,442 77.0,448 Q80.5,454 84.5,447" fill="none" stroke="#b4509e" stroke-width="1.2"/><path d="M53.5,464.0 L57.5,468.0 L61.5,464.0" fill="none" stroke="#222" stroke-width="1.3"/><path d="M70.0,458.5 L80.95,458.5 L85.0,462.55 L74.05,462.55 Z" fill="#a8489a"/><path d="M70.0,458.5 L74.05,462.55 L74.05,473.5 L70.0,469.45 Z" fill="#9c3f8c"/><rect x="74.05" y="462.55" width="10.95" height="10.95" fill="#b85ca6"/><path d="M90.0,476.5 L100.95,476.5 L105.0,480.55 L94.05,480.55 Z" fill="#b4509e"/><path d="M90.0,476.5 L94.05,480.55 L94.05,491.5 L90.0,487.45 Z" fill="#a8489a"/><rect x="94.05" y="480.55" width="10.95" height="10.95" fill="#cf8fc3"/><path d="M55.75,498.5 L59.25,502 L55.75,505.5" fill="none" stroke="#333" stroke-width="1.2"/><path d="M70.0,494.5 L80.95,494.5 L85.0,498.55 L74.05,498.55 Z" fill="#a8489a"/><path d="M70.0,494.5 L74.05,498.55 L74.05,509.5 L70.0,505.45 Z" fill="#9c3f8c"/><rect x="74.05" y="498.55" width="10.95" height="10.95" fill="#b85ca6"/><path d="M55.75,516.5 L59.25,520 L55.75,523.5" fill="none" stroke="#333" stroke-width="1.2"/><path d="M70.0,521 Q73.5,514 77.0,520 Q80.5,526 84.5,519" fill="none" stroke="#b4509e" stroke-width="1.2"/><path d="M79.0,513 L84.0,517 M84.0,513 L79.0,517 M81.5,512 L81.5,518" stroke="#333" stroke-width="0.9"/><path d="M70.0,534.5 L72.5,531.5 L83.5,531.5 L83.5,543.5 L70.0,543.5 Z" fill="#f3dced" stroke="#b4509e" stroke-width="1.1"/><path d="M70.0,534.5 L81.0,534.5 L83.5,531.5 M72.5,537 L80.5,537 M72.5,540 L80.5,540" fill="none" stroke="#b4509e" stroke-width="1"/><rect x="71.0" y="549.5" width="12" height="14" fill="#fff" stroke="#b4509e" stroke-width="1.1"/><path d="M73.5,560 L82.5,551" stroke="#b4509e" stroke-width="1.6"/><path d="M73.5,553 L78.5,553" stroke="#b4509e" stroke-width="1"/></svg>
<div class="r" style="left:403.5px;top:174.0px;width:402.6px;height:874.0px;background:#f9fafe;border-radius:6px 6px 0 0"></div>
<div class="t" style="left:411.5px;top:184.0px;font-size:21px;line-height:21px;color:#2f5eab;letter-spacing:-0.4px">Settings</div>
<div class="t" style="left:410.2px;top:211.0px;font-size:13px;line-height:13px;color:#3461b0;">Volume</div>
<div class="t" style="left:431.4px;top:232.3px;font-size:12px;line-height:12px;color:#1b1b1b;">Plot</div>
<div class="t" style="left:409.5px;top:264.8px;font-size:12px;line-height:12px;color:#1b1b1b;">Label:</div>
<div class="r" style="left:450.0px;top:262.0px;width:323.0px;height:18.0px;background:#fff;border:1px solid #cfcfcf"></div>
<div class="t" style="left:453.1px;top:264.8px;font-size:12px;line-height:12px;color:#1b1b1b;">Volume 1</div>
<div class="r" style="left:781.0px;top:260.5px;width:20.0px;height:21.0px;background:#ececec;border:1px solid #d6d6d6;border-radius:3px"></div>
<div class="r" style="left:404.0px;top:291.0px;width:402.0px;height:1.3px;background:#d8d8d8"></div>
<div class="t" style="left:430.5px;top:299.0px;font-size:13px;line-height:13px;color:#2c5ea8;">Data</div>
<div class="t" style="left:409.5px;top:332.8px;font-size:12px;line-height:12px;color:#1b1b1b;">Dataset:</div>
<div class="r" style="left:461.5px;top:328.0px;width:311.5px;height:20.5px;background:linear-gradient(#eeeeee,#e8e8e8);border:1px solid #d4d4d4;border-radius:3px"></div>
<div class="t" style="left:474.4px;top:333.1px;font-size:12px;line-height:12px;color:#1b1b1b;">From parent</div>
<div class="r" style="left:781.0px;top:327.0px;width:20.0px;height:21.0px;background:#ececec;border:1px solid #d6d6d6;border-radius:3px"></div>
<div class="r" style="left:404.0px;top:360.0px;width:402.0px;height:1.3px;background:#d8d8d8"></div>
<div class="t" style="left:430.3px;top:368.2px;font-size:13px;line-height:13px;color:#2c5ea8;">Expression</div>
<div class="t" style="left:409.2px;top:398.0px;font-size:12px;line-height:12px;color:#1b1b1b;">Expression:</div>
<div class="r" style="left:409.0px;top:417.0px;width:392.0px;height:17.5px;background:#fff;border:1px solid #cfcfcf"></div>
<div class="t" style="left:412.5px;top:420.1px;font-size:12px;line-height:12px;color:#1b1b1b;">T</div>
<div class="t" style="left:409.2px;top:442.6px;font-size:12px;line-height:12px;color:#1b1b1b;">Unit:</div>
<div class="r" style="left:409.0px;top:463.0px;width:392.0px;height:19.5px;background:#fff;border:1px solid #cfcfcf"></div>
<div class="r" style="left:781.0px;top:464.0px;width:19.0px;height:17.5px;background:#ececec"></div>
<div class="t" style="left:415.4px;top:466.8px;font-size:12px;line-height:12px;color:#1b1b1b;">K</div>
<div class="r" style="left:410.0px;top:490.5px;width:14.0px;height:12.5px;background:#eeeeee;border:1px solid #7a7a7a"></div>
<div class="t" style="left:439.3px;top:491.3px;font-size:12px;line-height:12px;color:#1b1b1b;">Description:</div>
<div class="r" style="left:409.0px;top:510.5px;width:392.0px;height:17.0px;background:#fbfbfb;border:1px solid #dedede"></div>
<div class="t" style="left:413.0px;top:513.0px;font-size:12px;line-height:12px;color:#8a8a8a;">Temperature</div>
<div class="r" style="left:404.0px;top:539.0px;width:402.0px;height:1.3px;background:#d8d8d8"></div>
<div class="t" style="left:430.1px;top:546.9px;font-size:13px;line-height:13px;color:#2c5ea8;">Title</div>
<div class="r" style="left:404.0px;top:568.0px;width:402.0px;height:1.3px;background:#d8d8d8"></div>
<div class="t" style="left:430.1px;top:575.9px;font-size:13px;line-height:13px;color:#2c5ea8;">Range</div>
<div class="r" style="left:404.0px;top:597.0px;width:402.0px;height:1.3px;background:#d8d8d8"></div>
<div class="t" style="left:430.1px;top:604.8px;font-size:13px;line-height:13px;color:#2c5ea8;">Coloring and Style</div>
<div class="t" style="left:409.5px;top:638.4px;font-size:12px;line-height:12px;color:#1b1b1b;">Coloring:</div>
<div class="r" style="left:562.4px;top:633.3px;width:238.3px;height:20.2px;background:linear-gradient(#eeeeee,#e8e8e8);border:1px solid #d4d4d4;border-radius:3px"></div>
<div class="t" style="left:575.5px;top:637.7px;font-size:12px;line-height:12px;color:#1b1b1b;">Color table</div>
<div class="t" style="left:409.5px;top:665.4px;font-size:12px;line-height:12px;color:#1b1b1b;">Color table:</div>
<div class="r" style="left:562.4px;top:661.5px;width:210.3px;height:20.0px;background:linear-gradient(#eeeeee,#e8e8e8);border:1px solid #d4d4d4;border-radius:3px"></div>
<div class="t" style="left:610.2px;top:664.7px;font-size:12px;line-height:12px;color:#1b1b1b;">HeatCameraLight</div>
<div class="r" style="left:781.3px;top:660.3px;width:19.4px;height:21.1px;background:#ececec;border:1px solid #d6d6d6;border-radius:3px"></div>
<div class="r" style="left:410.3px;top:689.4px;width:13.5px;height:12.2px;background:#eeeeee;border:1px solid #7a7a7a"></div>
<div class="t" style="left:429.6px;top:689.1px;font-size:12px;line-height:12px;color:#1b1b1b;">Color legend</div>
<div class="t" style="left:409.5px;top:713.7px;font-size:12px;line-height:12px;color:#1b1b1b;">Color table transformation:</div>
<div class="r" style="left:562.4px;top:709.3px;width:238.3px;height:20.1px;background:linear-gradient(#eeeeee,#e8e8e8);border:1px solid #d4d4d4;border-radius:3px"></div>
<div class="t" style="left:575.5px;top:713.7px;font-size:12px;line-height:12px;color:#1b1b1b;">None</div>
<div class="t" style="left:409.5px;top:741.2px;font-size:12px;line-height:12px;color:#1b1b1b;">Color table type:</div>
<div class="r" style="left:562.4px;top:736.4px;width:238.3px;height:20.2px;background:linear-gradient(#eeeeee,#e8e8e8);border:1px solid #d4d4d4;border-radius:3px"></div>
<div class="t" style="left:575.5px;top:740.7px;font-size:12px;line-height:12px;color:#1b1b1b;">Continuous</div>
<div class="t" style="left:409.5px;top:767.8px;font-size:12px;line-height:12px;color:#1b1b1b;">Scale:</div>
<div class="r" style="left:562.4px;top:763.4px;width:238.3px;height:19.8px;background:linear-gradient(#eeeeee,#e8e8e8);border:1px solid #d4d4d4;border-radius:3px"></div>
<div class="t" style="left:575.5px;top:767.5px;font-size:12px;line-height:12px;color:#1b1b1b;">Linear</div>
<div class="r" style="left:410.0px;top:791.2px;width:13.5px;height:12.4px;background:#eeeeee;border:1px solid #7a7a7a"></div>
<div class="t" style="left:429.3px;top:790.6px;font-size:12px;line-height:12px;color:#1b1b1b;">Wireframe</div>
<div class="r" style="left:404.0px;top:816.0px;width:402.0px;height:1.3px;background:#d8d8d8"></div>
<div class="t" style="left:430.1px;top:824.0px;font-size:13px;line-height:13px;color:#2c5ea8;">Quality</div>
<div class="r" style="left:404.0px;top:845.0px;width:402.0px;height:1.3px;background:#d8d8d8"></div>
<div class="t" style="left:430.1px;top:852.8px;font-size:13px;line-height:13px;color:#2c5ea8;">Element Filter</div>
<div class="r" style="left:404.0px;top:874.0px;width:402.0px;height:1.3px;background:#d8d8d8"></div>
<div class="t" style="left:430.1px;top:881.7px;font-size:13px;line-height:13px;color:#2c5ea8;">Shrink Elements</div>
<div class="r" style="left:404.0px;top:903.0px;width:402.0px;height:1.3px;background:#d8d8d8"></div>
<div class="t" style="left:430.1px;top:910.5px;font-size:13px;line-height:13px;color:#2c5ea8;">Inherit Style</div>
<svg class="s" style="left:0px;top:0px;" width="810" height="940" viewBox="0 0 810 940"><path d="M765,192 L774,192 L769.5,196.5 Z" fill="#b5b5b5"/><rect x="779.5" y="189.5" width="8.5" height="7.5" fill="none" stroke="#b5b5b5" stroke-width="1.5"/><rect x="796" y="188.5" width="5" height="6.5" fill="#b5b5b5"/><rect x="794" y="195" width="9" height="1.3" fill="#b5b5b5"/><rect x="798" y="195" width="1.3" height="4" fill="#b5b5b5"/><rect x="411.5" y="231.5" width="15" height="12" rx="1" fill="#fff" stroke="#8a8a8a"/><rect x="412" y="232" width="14" height="1.5" fill="#bbb"/><rect x="413.5" y="235" width="11.5" height="7" fill="#b4509e"/><circle cx="416.5" cy="238.5" r="2.8" fill="#b4509e" stroke="#fff" stroke-width="0.8"/><rect x="459" y="233" width="2" height="9" fill="#b4509e"/><path d="M462,237.5 L467,233 L467,242 Z" fill="#b4509e"/><rect x="466" y="236.5" width="9" height="2.2" fill="#b4509e"/><path d="M483,237.5 L489,233 L489,242 Z" fill="#b4509e"/><rect x="488" y="236.5" width="9" height="2.2" fill="#b4509e"/><rect x="506" y="236.5" width="9" height="2.2" fill="#8f8f8f"/><path d="M520,237.5 L514,233 L514,242 Z" fill="#8f8f8f"/><rect x="529" y="236.5" width="8" height="2.2" fill="#8f8f8f"/><path d="M541,237.5 L536,233 L536,242 Z" fill="#8f8f8f"/><rect x="541.5" y="233" width="2" height="9" fill="#8f8f8f"/><rect x="784.5" y="263.5" width="13" height="11" fill="#fff" stroke="#777"/><rect x="785" y="264" width="12" height="2" fill="#999"/><path d="M788,268.5 L795,268.5 M788,271 L795,271" stroke="#1a9a7a" stroke-width="1"/><path d="M783,277 L787,273 M784.5,273 L787,273 L787,275.5" stroke="#1a9a7a" stroke-width="1.3" fill="none"/><path d="M410.5,303.5 L414.5,307.5 L418.5,303.5" fill="none" stroke="#2c5ea8" stroke-width="1.2"/><path d="M759.0,337.0 L766.0,337.0 L762.5,341.0 Z" fill="#111"/><path d="M785,331 L790,331 M785,344 L790,344 M786.5,337.5 L789.5,337.5 M786.5,340.5 L789.5,340.5" stroke="#888" stroke-width="1"/><rect x="785" y="334" width="6" height="2" fill="#2f86cc"/><path d="M793,336 L797,336 L797,344 L793,344" fill="none" stroke="#2f86cc" stroke-width="1.1"/><path d="M792,335 L795,332.5 L795,337.5 Z" fill="#2f86cc"/><path d="M410.5,373.0 L414.5,377.0 L418.5,373.0" fill="none" stroke="#2c5ea8" stroke-width="1.2"/><path d="M685,373.5 L697,373.5" stroke="#999" stroke-width="1.1"/><path d="M683,373.5 L688,370.5 L688,376.5 Z" fill="#999"/><path d="M706,373.5 L717,373.5" stroke="#2f86cc" stroke-width="1.3"/><path d="M720,373.5 L715,370 L715,377 Z" fill="#2f86cc"/><rect x="728.5" y="369.5" width="15" height="8" fill="none" stroke="#2f86cc" stroke-width="1.1"/><rect x="731" y="372" width="2" height="3" fill="#2f86cc"/><rect x="734" y="372" width="2" height="3" fill="#2f86cc"/><path d="M739,366 L739,381 M737,366 L741,366 M737,381 L741,381" stroke="#2f86cc" stroke-width="1"/><path d="M749.0,371.5 L756.0,371.5 L752.5,375.5 Z" fill="#111"/><rect x="768.5" y="369.5" width="15" height="8" fill="none" stroke="#2f86cc" stroke-width="1.1"/><rect x="770" y="371.5" width="7" height="4" fill="#2f86cc"/><path d="M778,366 L778,381 M776,366 L780,366 M776,381 L780,381" stroke="#2f86cc" stroke-width="1"/><path d="M789.0,371.5 L796.0,371.5 L792.5,375.5 Z" fill="#111"/><path d="M787.0,470.5 L794.0,470.5 L790.5,474.5 Z" fill="#111"/><path d="M412.25,549.9 L415.75,553.4 L412.25,556.9" fill="none" stroke="#222" stroke-width="1.3"/><path d="M412.25,578.9 L415.75,582.4 L412.25,585.9" fill="none" stroke="#222" stroke-width="1.3"/><path d="M410.5,609.5 L414.5,613.5 L418.5,609.5" fill="none" stroke="#2c5ea8" stroke-width="1.2"/><path d="M787.0,642.0 L794.0,642.0 L790.5,646.0 Z" fill="#111"/><defs><linearGradient id="ctg" x1="0" x2="1" y1="0" y2="0"><stop offset="0" stop-color="#3f2a8c"/><stop offset="0.3" stop-color="#8c3aa8"/><stop offset="0.55" stop-color="#e05a6a"/><stop offset="0.8" stop-color="#f8a23a"/><stop offset="1" stop-color="#fff6c0"/></linearGradient></defs><rect x="575" y="663.2" width="31.7" height="15.5" fill="url(#ctg)"/><path d="M759.0,669.5 L766.0,669.5 L762.5,673.5 Z" fill="#111"/><rect x="784.5" y="665.5" width="12" height="10" fill="none" stroke="#777"/><path d="M784.5,668 L796.5,668 M787,665.5 L787,675.5" stroke="#777" stroke-width="0.9"/><path d="M790,671 L799,671" stroke="#2f86cc" stroke-width="1.6"/><path d="M789,671 L792.5,668 L792.5,674 Z" fill="#2f86cc"/><path d="M412.5,695 L415.5,699 L421.5,690.5" fill="none" stroke="#222" stroke-width="1.6"/><path d="M787.0,717.5 L794.0,717.5 L790.5,721.5 Z" fill="#111"/><path d="M787.0,744.5 L794.0,744.5 L790.5,748.5 Z" fill="#111"/><path d="M787.0,771.5 L794.0,771.5 L790.5,775.5 Z" fill="#111"/><path d="M412.25,827.0 L415.75,830.5 L412.25,834.0" fill="none" stroke="#222" stroke-width="1.3"/><path d="M412.25,855.8 L415.75,859.3 L412.25,862.8" fill="none" stroke="#222" stroke-width="1.3"/><path d="M412.25,884.7 L415.75,888.2 L412.25,891.7" fill="none" stroke="#222" stroke-width="1.3"/><path d="M412.25,913.5 L415.75,917.0 L412.25,920.5" fill="none" stroke="#222" stroke-width="1.3"/></svg>
<div class="r" style="left:812.5px;top:174.0px;width:1087.0px;height:789.0px;background:linear-gradient(180deg,#f9fafe 0px,#f8f9fe 60px,#e4f0fd 789px);border-radius:6px 6px 0 0"></div>
<div class="t" style="left:820.0px;top:184.1px;font-size:21px;line-height:21px;color:#2f5eab;letter-spacing:-0.5px">Graphics</div>
<svg class="s" style="left:0px;top:0px;" width="1902" height="300" viewBox="0 0 1902 300"><path d="M1857,192 L1866,192 L1861.5,196.5 Z" fill="#b5b5b5"/><rect x="1871.5" y="189.5" width="8.5" height="7.5" fill="none" stroke="#b5b5b5" stroke-width="1.5"/><rect x="1888" y="188.5" width="5" height="6.5" fill="#b5b5b5"/><rect x="1886" y="195" width="9" height="1.3" fill="#b5b5b5"/><rect x="1890" y="195" width="1.3" height="4" fill="#b5b5b5"/><rect x="1172.5" y="208" width="38.5" height="19.5" rx="2" fill="#cce4f7" stroke="#a8d0f0" stroke-width="0.8"/><rect x="1255.5" y="208" width="19" height="19.5" rx="2" fill="#cce4f7" stroke="#a8d0f0" stroke-width="0.8"/><rect x="1278.5" y="208" width="19" height="19.5" rx="2" fill="#cce4f7" stroke="#a8d0f0" stroke-width="0.8"/><rect x="1301.5" y="208" width="19" height="19.5" rx="2" fill="#cce4f7" stroke="#a8d0f0" stroke-width="0.8"/><rect x="930.5" y="209" width="1" height="17" fill="#d0d0d0"/><rect x="1071" y="209" width="1" height="17" fill="#d0d0d0"/><rect x="1119" y="209" width="1" height="17" fill="#d0d0d0"/><rect x="1167" y="209" width="1" height="17" fill="#d0d0d0"/><rect x="1327" y="209" width="1" height="17" fill="#d0d0d0"/><rect x="1374" y="209" width="1" height="17" fill="#d0d0d0"/><circle cx="826.5" cy="215.5" r="5" fill="none" stroke="#2f86cc" stroke-width="1.6"/><path d="M830.0,219.0 L834.0,223.0" stroke="#2f86cc" stroke-width="2.2"/><path d="M824.0,215.5 L829.0,215.5 M826.5,213.0 L826.5,218.0" stroke="#2f86cc" stroke-width="1.2"/><circle cx="849.5" cy="215.5" r="5" fill="none" stroke="#2f86cc" stroke-width="1.6"/><path d="M853.0,219.0 L857.0,223.0" stroke="#2f86cc" stroke-width="2.2"/><path d="M847.0,215.5 L852.0,215.5" stroke="#2f86cc" stroke-width="1.2"/><circle cx="875" cy="215" r="5" fill="none" stroke="#2f86cc" stroke-width="1.6"/><path d="M878.5,218.5 L882.5,222.5" stroke="#2f86cc" stroke-width="2.2"/><path d="M872.5,215 L877.5,215 M875,212.5 L875,217.5" stroke="#2f86cc" stroke-width="1.2"/><rect x="866.5" y="216.5" width="8" height="7" fill="none" stroke="#2f86cc" stroke-width="1.1" stroke-dasharray="1.8,1.2"/><path d="M888.0,215.0 L895.0,215.0 L891.5,219.0 Z" fill="#111"/><rect x="906.5" y="210.5" width="15" height="14" fill="none" stroke="#777" stroke-width="1"/><path d="M914,212.5 L914,222.5 M909,217.5 L919,217.5" stroke="#2f86cc" stroke-width="1.2"/><path d="M914,211.5 L912,214 L916,214 Z M914,223.5 L912,221 L916,221 Z M908,217.5 L910.5,215.5 L910.5,219.5 Z M920,217.5 L917.5,215.5 L917.5,219.5 Z" fill="#2f86cc"/><path d="M946,220 L946,209" stroke="#3aa040" stroke-width="1.3"/><path d="M946,220 L938,224" stroke="#3aa040" stroke-width="1.3"/><path d="M946,220 L955,223" stroke="#e0305a" stroke-width="1.3"/><path d="M960.0,215.0 L967.0,215.0 L963.5,219.0 Z" fill="#111"/><path d="M981,209 L981,225 L995,225" fill="none" stroke="#3aa040" stroke-width="1"/><path d="M981,225 L995,225" stroke="#e0305a" stroke-width="1"/><text x="983" y="220" font-size="10" font-family="Liberation Sans" fill="#888">xy</text><path d="M1003,209 L1003,225 L1017,225" fill="none" stroke="#3aa040" stroke-width="1"/><path d="M1003,225 L1017,225" stroke="#e0305a" stroke-width="1"/><text x="1005" y="220" font-size="10" font-family="Liberation Sans" fill="#888">yz</text><path d="M1027,209 L1027,225 L1041,225" fill="none" stroke="#3aa040" stroke-width="1"/><path d="M1027,225 L1041,225" stroke="#e0305a" stroke-width="1"/><text x="1029" y="220" font-size="10" font-family="Liberation Sans" fill="#888">xz</text><rect x="1049" y="212" width="8" height="11" fill="#2f86cc"/><path d="M1057,217.5 L1063,212 L1063,223 Z" fill="#2f86cc"/><path d="M1093,213 A6.5,6.5 0 1 1 1082,215" fill="none" stroke="#2f86cc" stroke-width="1.6"/><path d="M1089,209 L1095,213 L1089,216 Z" fill="#2f86cc"/><path d="M1100.0,215.0 L1107.0,215.0 L1103.5,219.0 Z" fill="#111"/><g fill="none" stroke="#888" stroke-width="1"><rect x="1126.5" y="210.5" width="9.95" height="9.95"/><rect x="1130.55" y="214.55" width="9.95" height="9.95"/><path d="M1126.5,210.5 L1130.55,214.55 M1136.45,210.5 L1140.5,214.55 M1126.5,220.45 L1130.55,224.5 M1136.45,220.45 L1140.5,224.5"/></g><path d="M1148.0,215.0 L1155.0,215.0 L1151.5,219.0 Z" fill="#111"/><path d="M1177,214.5 L1181,214.5 L1186,210.5 L1186,224.5 L1181,220.5 L1177,220.5 Z" fill="#2f86cc"/><path d="M1186,214 A3.5,3.5 0 0 1 1186,221" fill="none" stroke="#2f86cc" stroke-width="1.2"/><rect x="1194" y="211" width="0.8" height="13" fill="#8fb8d8"/><path d="M1197.5,215.0 L1204.5,215.0 L1201,219.0 Z" fill="#111"/><path d="M1217,213 L1220,210 L1231,210 L1231,221 L1228,224 L1217,224 Z" fill="#dbe9f6" stroke="#2f86cc" stroke-width="1.1"/><path d="M1217,213 L1228,213 L1228,224 M1228,213 L1231,210" fill="none" stroke="#2f86cc" stroke-width="1"/><path d="M1237.5,215.0 L1244.5,215.0 L1241,219.0 Z" fill="#111"/><rect x="1257.5" y="210.5" width="15" height="14" fill="#eef5fb" stroke="#888" stroke-width="1"/><path d="M1265,212 L1265,220 M1265,220 L1260,222 M1265,220 L1270,222" stroke="#3aa040" stroke-width="1"/><path d="M1265,220 L1270,222" stroke="#e0305a" stroke-width="1"/><rect x="1280.5" y="210.5" width="15" height="14" fill="#eef5fb" stroke="#777" stroke-width="1"/><rect x="1283" y="213" width="10" height="9" fill="none" stroke="#2f86cc" stroke-width="1"/><path d="M1286.3,213 L1286.3,222 M1283,216 L1293,216" stroke="#2f86cc" stroke-width="0.9"/><path d="M1289.7,213 L1289.7,222 M1283,219 L1293,219" stroke="#2f86cc" stroke-width="0.9"/><rect x="1303.5" y="210.5" width="15" height="14" fill="#eef5fb" stroke="#888" stroke-width="1"/><defs><linearGradient id="rb" x1="0" y1="0" x2="0" y2="1"><stop offset="0" stop-color="#3070d0"/><stop offset="0.35" stop-color="#e0c040"/><stop offset="0.7" stop-color="#f08030"/><stop offset="1" stop-color="#d02030"/></linearGradient></defs><rect x="1313" y="212" width="3" height="11" fill="url(#rb)"/><circle cx="1342" cy="217.5" r="6.5" fill="#eee" stroke="#888" stroke-width="1.1"/><circle cx="1340" cy="215" r="1.3" fill="#e05050"/><circle cx="1343" cy="214" r="1.3" fill="#50a050"/><circle cx="1339" cy="219" r="1.3" fill="#3080d0"/><path d="M1355.5,215.0 L1362.5,215.0 L1359,219.0 Z" fill="#111"/><circle cx="1389.5" cy="217.5" r="6.5" fill="none" stroke="#2f86cc" stroke-width="2.5" stroke-dasharray="4,1.5"/><circle cx="1389.5" cy="217.5" r="2.5" fill="#fff"/><path d="M1403.5,215.0 L1410.5,215.0 L1407,219.0 Z" fill="#111"/><rect x="1423" y="212" width="16" height="12" rx="1.5" fill="#2f86cc"/><rect x="1427" y="210" width="6" height="3" fill="#2f86cc"/><circle cx="1431" cy="218" r="3.2" fill="#fff"/><circle cx="1431" cy="218" r="1.8" fill="#2f86cc"/><rect x="1449.5" y="209.5" width="9" height="5" fill="none" stroke="#2f86cc" stroke-width="1.1"/><rect x="1446.5" y="213.5" width="15" height="7" rx="1" fill="none" stroke="#2f86cc" stroke-width="1.3"/><rect x="1449.5" y="218.5" width="9" height="6" fill="#fff" stroke="#2f86cc" stroke-width="1.1"/><rect x="1876" y="239" width="15" height="12" rx="2" fill="#2a4aa8"/><path d="M1879,241.5 L1887,245 L1879,248.5 Z" fill="#f0d840"/></svg>
<div class="t" style="left:830.2px;top:245.4px;font-size:13.5px;line-height:13.5px;color:#111;letter-spacing:0.3px">Time=60 s</div>
<div class="t" style="left:1280.4px;top:245.6px;font-size:13.5px;line-height:13.5px;color:#111;">Volume: Temperature (K)</div>
<svg class="s" style="left:0px;top:0px;" width="1902" height="1000" viewBox="0 0 1902 1000"><line x1="1088.7" y1="734.4" x2="1263.5" y2="823.2" stroke="#8c8c8c" stroke-width="1"/><line x1="1334" y1="734.7" x2="1403.5" y2="769.3" stroke="#8c8c8c" stroke-width="1"/><line x1="1504.6" y1="701" x2="1538.8" y2="717.3" stroke="#8c8c8c" stroke-width="1"/><line x1="1623.6" y1="644.5" x2="1669.7" y2="666.2" stroke="#8c8c8c" stroke-width="1"/><line x1="1686.4" y1="570.6" x2="1798" y2="617.8" stroke="#8c8c8c" stroke-width="1"/><line x1="1262" y1="389.2" x2="1286" y2="399" stroke="#8c8c8c" stroke-width="1"/><line x1="812.8" y1="596" x2="839" y2="607.5" stroke="#8c8c8c" stroke-width="1"/><line x1="1145.2" y1="814.6" x2="1363" y2="732" stroke="#8c8c8c" stroke-width="1"/><line x1="935" y1="706.2" x2="965" y2="695.8" stroke="#8c8c8c" stroke-width="1"/><line x1="812.8" y1="579.5" x2="837.4" y2="573.6" stroke="#8c8c8c" stroke-width="1"/><line x1="1350" y1="399" x2="1378.7" y2="389.6" stroke="#8c8c8c" stroke-width="1"/><line x1="1654.8" y1="620.4" x2="1801.7" y2="565.8" stroke="#8c8c8c" stroke-width="1"/><line x1="812.8" y1="497.5" x2="1307" y2="335" stroke="#8a8a8a" stroke-width="4.2"/><line x1="812.8" y1="497.5" x2="1307" y2="335" stroke="#b0b0b0" stroke-width="2.2" stroke-dasharray="1,1.3"/><line x1="1347" y1="333.5" x2="1887" y2="553" stroke="#8a8a8a" stroke-width="4.2"/><line x1="1347" y1="333.5" x2="1887" y2="553" stroke="#b0b0b0" stroke-width="2.2" stroke-dasharray="1,1.3"/><defs>
<linearGradient id="base" gradientUnits="userSpaceOnUse" x1="312.1" y1="714.8" x2="492.2" y2="1127.2"><stop offset="0.000" stop-color="#c04ab6"/><stop offset="0.122" stop-color="#b246b8"/><stop offset="0.244" stop-color="#9a40be"/><stop offset="0.489" stop-color="#7036b4"/><stop offset="0.600" stop-color="#6234ac"/><stop offset="0.800" stop-color="#4f2e9c"/><stop offset="1.000" stop-color="#44298d"/></linearGradient>
<radialGradient id="cold" gradientUnits="userSpaceOnUse" cx="1660" cy="560" r="330" gradientTransform="translate(1660 560) rotate(-10) scale(1 0.6) translate(-1660 -560)"><stop offset="0" stop-color="#3c2a84" stop-opacity="1"/><stop offset="0.45" stop-color="#3e2a86" stop-opacity="0.75"/><stop offset="1" stop-color="#44298c" stop-opacity="0"/></radialGradient>
<radialGradient id="pink" gradientUnits="userSpaceOnUse" cx="1290" cy="392" r="360" gradientTransform="translate(1290 392) rotate(5) scale(1 0.34) translate(-1290 -392)">
<stop offset="0" stop-color="#ff5c76" stop-opacity="1"/><stop offset="0.45" stop-color="#fc5a84" stop-opacity="0.95"/><stop offset="0.75" stop-color="#d84ca6" stop-opacity="0.55"/><stop offset="1" stop-color="#c048b0" stop-opacity="0"/></radialGradient>
<radialGradient id="pink2" gradientUnits="userSpaceOnUse" cx="1450" cy="424" r="200" gradientTransform="translate(1450 424) rotate(10) scale(1 0.24) translate(-1450 -424)">
<stop offset="0" stop-color="#ff5c72" stop-opacity="1"/><stop offset="0.55" stop-color="#f45a80" stop-opacity="0.8"/><stop offset="1" stop-color="#c04aa8" stop-opacity="0"/></radialGradient>
<radialGradient id="orng" gradientUnits="userSpaceOnUse" cx="1450" cy="414" r="220" gradientTransform="translate(1450 414) rotate(10) scale(1 0.22) translate(-1450 -414)">
<stop offset="0" stop-color="#fda23e" stop-opacity="1"/><stop offset="0.45" stop-color="#fb8a46" stop-opacity="0.85"/><stop offset="0.8" stop-color="#f86a60" stop-opacity="0.35"/><stop offset="1" stop-color="#f06070" stop-opacity="0"/></radialGradient>
<radialGradient id="hot" gradientUnits="userSpaceOnUse" cx="1563" cy="441" r="80" gradientTransform="translate(1563 441) rotate(18) scale(1 0.22) translate(-1563 -441)">
<stop offset="0" stop-color="#fffef4" stop-opacity="1"/><stop offset="0.3" stop-color="#fff4b0" stop-opacity="1"/><stop offset="0.6" stop-color="#fdc850" stop-opacity="0.9"/><stop offset="1" stop-color="#fca040" stop-opacity="0"/></radialGradient>
<clipPath id="fc"><path d="M1015.1,715.9 L1027.5,718.7 L1040.2,721.4 L1053.1,723.8 L1066.3,726.1 L1079.8,728.1 L1093.4,730.0 L1107.3,731.7 L1121.4,733.1 L1135.6,734.4 L1150.0,735.4 L1164.5,736.3 L1179.2,736.9 L1193.9,737.3 L1208.7,737.6 L1223.6,737.6 L1238.6,737.4 L1253.5,737.0 L1268.5,736.3 L1283.5,735.5 L1298.4,734.5 L1313.3,733.2 L1328.2,731.8 L1342.9,730.1 L1357.5,728.3 L1372.1,726.3 L1386.5,724.0 L1400.7,721.6 L1414.8,719.0 L1428.6,716.2 L1442.3,713.2 L1455.7,710.0 L1468.9,706.6 L1481.9,703.1 L1494.5,699.4 L1506.9,695.6 L1519.0,691.6 L1530.7,687.4 L1542.1,683.1 L1553.2,678.7 L1563.9,674.1 L1574.3,669.4 L1584.2,664.6 L1593.7,659.6 L1602.9,654.5 L1611.6,649.4 L1619.9,644.1 L1627.7,638.7 L1635.1,633.3 L1642.0,627.7 L1648.4,622.1 L1654.4,616.4 L1659.8,610.7 L1664.8,604.9 L1669.3,599.1 L1673.3,593.2 L1676.7,587.3 L1679.7,581.4 L1682.1,575.4 L1684.0,569.5 L1685.4,563.5 L1686.2,557.6 L1686.6,551.7 L1686.4,545.7 L1685.6,539.9 L1684.4,534.0 L1682.6,528.2 L1680.3,522.5 L1677.5,516.8 L1674.2,511.1 L1670.3,505.6 L1666.0,500.1 L1661.1,494.7 L1655.8,489.4 L1649.9,484.2 L1643.6,479.1 L1636.8,474.1 L1629.5,469.2 L1621.8,464.4 L1613.7,459.8 L1605.1,455.3 L1596.0,451.0 L1586.6,446.8 L1576.7,442.7 L1566.5,438.8 L1555.9,435.1 L1544.9,431.5 L1533.6,428.1 L1521.9,424.9 L1509.9,421.8 L1497.6,418.9 L1485.0,416.3 L1472.1,413.8 L1459.0,411.5 L1445.6,409.4 L1432.0,407.4 L1418.2,405.7 L1404.2,404.2 L1390.0,402.9 L1375.6,401.8 L1361.1,400.9 L1346.5,400.2 L1331.8,399.8 L1317.0,399.5 L1302.1,399.4 L1287.2,399.6 L1272.2,399.9 L1257.2,400.5 L1242.3,401.3 L1227.3,402.2 L1212.4,403.4 L1197.5,404.8 L1182.8,406.4 L1168.1,408.2 L1153.5,410.2 L1139.1,412.4 L1124.8,414.8 L1110.7,417.4 L1096.8,420.1 L1083.1,423.1 L1069.6,426.2 L1056.4,429.5 L1043.3,433.0 L1030.6,436.6 L1018.2,440.4 L1006.0,444.4 L994.2,448.5 L982.7,452.8 L971.5,457.2 L960.7,461.7 L950.3,466.4 L940.3,471.2 L930.6,476.1 L921.4,481.2 L912.6,486.3 L904.2,491.6 L896.2,496.9 L888.7,502.4 L881.7,507.9 L875.2,513.5 L869.1,519.1 L863.5,524.9 L858.4,530.6 L853.8,536.5 L849.7,542.3 L846.1,548.2 L843.0,554.1 L840.5,560.1 L838.4,566.0 L836.9,572.0 L835.9,577.9 L835.5,583.9 L835.5,589.8 L836.1,595.7 L837.2,601.5 L838.9,607.3 L841.1,613.1 L843.7,618.8 L847.0,624.5 L850.7,630.0 L854.9,635.6 Z"/></clipPath>
</defs><defs><linearGradient id="side" gradientUnits="userSpaceOnUse" x1="850" y1="0" x2="1690" y2="0"><stop offset="0" stop-color="#7a42c0"/><stop offset="0.4" stop-color="#6038b0"/><stop offset="1" stop-color="#3a2a80"/></linearGradient></defs><path d="M1015.1,720.9 L1027.5,723.7 L1040.2,726.4 L1053.1,728.8 L1066.3,731.1 L1079.8,733.1 L1093.4,735.0 L1107.3,736.7 L1121.4,738.1 L1135.6,739.4 L1150.0,740.4 L1164.5,741.3 L1179.2,741.9 L1193.9,742.3 L1208.7,742.6 L1223.6,742.6 L1238.6,742.4 L1253.5,742.0 L1268.5,741.3 L1283.5,740.5 L1298.4,739.5 L1313.3,738.2 L1328.2,736.8 L1342.9,735.1 L1357.5,733.3 L1372.1,731.3 L1386.5,729.0 L1400.7,726.6 L1414.8,724.0 L1428.6,721.2 L1442.3,718.2 L1455.7,715.0 L1468.9,711.6 L1481.9,708.1 L1494.5,704.4 L1506.9,700.6 L1519.0,696.6 L1530.7,692.4 L1542.1,688.1 L1553.2,683.7 L1563.9,679.1 L1574.3,674.4 L1584.2,669.6 L1593.7,664.6 L1602.9,659.5 L1611.6,654.4 L1619.9,649.1 L1627.7,643.7 L1635.1,638.3 L1642.0,632.7 L1648.4,627.1 L1654.4,621.4 L1659.8,615.7 L1664.8,609.9 L1669.3,604.1 L1673.3,598.2 L1676.7,592.3 L1679.7,586.4 L1682.1,580.4 L1684.0,574.5 L1685.4,568.5 L1686.2,562.6 L1686.6,556.7 L1686.4,550.7 L1685.6,544.9 L1684.4,539.0 L1682.6,533.2 L1680.3,527.5 L1677.5,521.8 L1674.2,516.1 L1670.3,510.6 L1666.0,505.1 L1661.1,499.7 L1655.8,494.4 L1649.9,489.2 L1643.6,484.1 L1636.8,479.1 L1629.5,474.2 L1621.8,469.4 L1613.7,464.8 L1605.1,460.3 L1596.0,456.0 L1586.6,451.8 L1576.7,447.7 L1566.5,443.8 L1555.9,440.1 L1544.9,436.5 L1533.6,433.1 L1521.9,429.9 L1509.9,426.8 L1497.6,423.9 L1485.0,421.3 L1472.1,418.8 L1459.0,416.5 L1445.6,414.4 L1432.0,412.4 L1418.2,410.7 L1404.2,409.2 L1390.0,407.9 L1375.6,406.8 L1361.1,405.9 L1346.5,405.2 L1331.8,404.8 L1317.0,404.5 L1302.1,404.4 L1287.2,404.6 L1272.2,404.9 L1257.2,405.5 L1242.3,406.3 L1227.3,407.2 L1212.4,408.4 L1197.5,409.8 L1182.8,411.4 L1168.1,413.2 L1153.5,415.2 L1139.1,417.4 L1124.8,419.8 L1110.7,422.4 L1096.8,425.1 L1083.1,428.1 L1069.6,431.2 L1056.4,434.5 L1043.3,438.0 L1030.6,441.6 L1018.2,445.4 L1006.0,449.4 L994.2,453.5 L982.7,457.8 L971.5,462.2 L960.7,466.7 L950.3,471.4 L940.3,476.2 L930.6,481.1 L921.4,486.2 L912.6,491.3 L904.2,496.6 L896.2,501.9 L888.7,507.4 L881.7,512.9 L875.2,518.5 L869.1,524.1 L863.5,529.9 L858.4,535.6 L853.8,541.5 L849.7,547.3 L846.1,553.2 L843.0,559.1 L840.5,565.1 L838.4,571.0 L836.9,577.0 L835.9,582.9 L835.5,588.9 L835.5,594.8 L836.1,600.7 L837.2,606.5 L838.9,612.3 L841.1,618.1 L843.7,623.8 L847.0,629.5 L850.7,635.0 L854.9,640.6 Z" fill="url(#side)" stroke="#111" stroke-width="1"/><g clip-path="url(#fc)"><rect x="830" y="390" width="870" height="360" fill="url(#base)"/><rect x="830" y="390" width="870" height="360" fill="url(#cold)"/><rect x="830" y="390" width="870" height="360" fill="url(#pink)"/><rect x="830" y="390" width="870" height="360" fill="url(#pink2)"/><rect x="830" y="390" width="870" height="360" fill="url(#orng)"/><rect x="830" y="390" width="870" height="360" fill="url(#hot)"/></g><path d="M1015.1,715.9 L1027.5,718.7 L1040.2,721.4 L1053.1,723.8 L1066.3,726.1 L1079.8,728.1 L1093.4,730.0 L1107.3,731.7 L1121.4,733.1 L1135.6,734.4 L1150.0,735.4 L1164.5,736.3 L1179.2,736.9 L1193.9,737.3 L1208.7,737.6 L1223.6,737.6 L1238.6,737.4 L1253.5,737.0 L1268.5,736.3 L1283.5,735.5 L1298.4,734.5 L1313.3,733.2 L1328.2,731.8 L1342.9,730.1 L1357.5,728.3 L1372.1,726.3 L1386.5,724.0 L1400.7,721.6 L1414.8,719.0 L1428.6,716.2 L1442.3,713.2 L1455.7,710.0 L1468.9,706.6 L1481.9,703.1 L1494.5,699.4 L1506.9,695.6 L1519.0,691.6 L1530.7,687.4 L1542.1,683.1 L1553.2,678.7 L1563.9,674.1 L1574.3,669.4 L1584.2,664.6 L1593.7,659.6 L1602.9,654.5 L1611.6,649.4 L1619.9,644.1 L1627.7,638.7 L1635.1,633.3 L1642.0,627.7 L1648.4,622.1 L1654.4,616.4 L1659.8,610.7 L1664.8,604.9 L1669.3,599.1 L1673.3,593.2 L1676.7,587.3 L1679.7,581.4 L1682.1,575.4 L1684.0,569.5 L1685.4,563.5 L1686.2,557.6 L1686.6,551.7 L1686.4,545.7 L1685.6,539.9 L1684.4,534.0 L1682.6,528.2 L1680.3,522.5 L1677.5,516.8 L1674.2,511.1 L1670.3,505.6 L1666.0,500.1 L1661.1,494.7 L1655.8,489.4 L1649.9,484.2 L1643.6,479.1 L1636.8,474.1 L1629.5,469.2 L1621.8,464.4 L1613.7,459.8 L1605.1,455.3 L1596.0,451.0 L1586.6,446.8 L1576.7,442.7 L1566.5,438.8 L1555.9,435.1 L1544.9,431.5 L1533.6,428.1 L1521.9,424.9 L1509.9,421.8 L1497.6,418.9 L1485.0,416.3 L1472.1,413.8 L1459.0,411.5 L1445.6,409.4 L1432.0,407.4 L1418.2,405.7 L1404.2,404.2 L1390.0,402.9 L1375.6,401.8 L1361.1,400.9 L1346.5,400.2 L1331.8,399.8 L1317.0,399.5 L1302.1,399.4 L1287.2,399.6 L1272.2,399.9 L1257.2,400.5 L1242.3,401.3 L1227.3,402.2 L1212.4,403.4 L1197.5,404.8 L1182.8,406.4 L1168.1,408.2 L1153.5,410.2 L1139.1,412.4 L1124.8,414.8 L1110.7,417.4 L1096.8,420.1 L1083.1,423.1 L1069.6,426.2 L1056.4,429.5 L1043.3,433.0 L1030.6,436.6 L1018.2,440.4 L1006.0,444.4 L994.2,448.5 L982.7,452.8 L971.5,457.2 L960.7,461.7 L950.3,466.4 L940.3,471.2 L930.6,476.1 L921.4,481.2 L912.6,486.3 L904.2,491.6 L896.2,496.9 L888.7,502.4 L881.7,507.9 L875.2,513.5 L869.1,519.1 L863.5,524.9 L858.4,530.6 L853.8,536.5 L849.7,542.3 L846.1,548.2 L843.0,554.1 L840.5,560.1 L838.4,566.0 L836.9,572.0 L835.9,577.9 L835.5,583.9 L835.5,589.8 L836.1,595.7 L837.2,601.5 L838.9,607.3 L841.1,613.1 L843.7,618.8 L847.0,624.5 L850.7,630.0 L854.9,635.6 Z" fill="none" stroke="#111" stroke-width="1"/><defs><linearGradient id="cbar" x1="0" y1="0" x2="0" y2="1">
<stop offset="0" stop-color="#fffbe8"/><stop offset="0.1" stop-color="#fde48e"/><stop offset="0.2" stop-color="#f8bd48"/><stop offset="0.3" stop-color="#f3903c"/><stop offset="0.4" stop-color="#ec6a56"/><stop offset="0.5" stop-color="#d8517a"/><stop offset="0.6" stop-color="#b6459a"/><stop offset="0.7" stop-color="#9040ad"/><stop offset="0.8" stop-color="#6c37ad"/><stop offset="0.9" stop-color="#4f2f98"/><stop offset="1" stop-color="#3e2a80"/></linearGradient></defs><rect x="1828" y="300.5" width="15.5" height="626.5" fill="url(#cbar)" stroke="#555" stroke-width="1.2"/><path d="M1828,316.4 L1831.5,316.4 M1840,316.4 L1843.5,316.4" stroke="#111" stroke-width="1"/><path d="M1828,379.4 L1831.5,379.4 M1840,379.4 L1843.5,379.4" stroke="#111" stroke-width="1"/><path d="M1828,442.4 L1831.5,442.4 M1840,442.4 L1843.5,442.4" stroke="#111" stroke-width="1"/><path d="M1828,505.3 L1831.5,505.3 M1840,505.3 L1843.5,505.3" stroke="#111" stroke-width="1"/><path d="M1828,568.3 L1831.5,568.3 M1840,568.3 L1843.5,568.3" stroke="#111" stroke-width="1"/><path d="M1828,631.3 L1831.5,631.3 M1840,631.3 L1843.5,631.3" stroke="#111" stroke-width="1"/><path d="M1828,694.3 L1831.5,694.3 M1840,694.3 L1843.5,694.3" stroke="#111" stroke-width="1"/><path d="M1828,757.3 L1831.5,757.3 M1840,757.3 L1843.5,757.3" stroke="#111" stroke-width="1"/><path d="M1828,820.2 L1831.5,820.2 M1840,820.2 L1843.5,820.2" stroke="#111" stroke-width="1"/><path d="M1828,883.2 L1831.5,883.2 M1840,883.2 L1843.5,883.2" stroke="#111" stroke-width="1"/></svg>
<div class="t" style="left:1852.0px;top:309.7px;font-size:14px;line-height:14px;color:#111;">620</div>
<div class="t" style="left:1852.0px;top:372.7px;font-size:14px;line-height:14px;color:#111;">610</div>
<div class="t" style="left:1852.0px;top:435.7px;font-size:14px;line-height:14px;color:#111;">600</div>
<div class="t" style="left:1852.0px;top:498.7px;font-size:14px;line-height:14px;color:#111;">590</div>
<div class="t" style="left:1852.0px;top:561.7px;font-size:14px;line-height:14px;color:#111;">580</div>
<div class="t" style="left:1852.0px;top:624.6px;font-size:14px;line-height:14px;color:#111;">570</div>
<div class="t" style="left:1852.0px;top:687.6px;font-size:14px;line-height:14px;color:#111;">560</div>
<div class="t" style="left:1852.0px;top:750.6px;font-size:14px;line-height:14px;color:#111;">550</div>
<div class="t" style="left:1852.0px;top:813.6px;font-size:14px;line-height:14px;color:#111;">540</div>
<div class="t" style="left:1852.0px;top:876.6px;font-size:14px;line-height:14px;color:#111;">530</div>
<div class="t" style="left:922.0px;top:713.1px;font-size:13.5px;line-height:13.5px;color:#111;">0</div>
<div class="t" style="left:898.0px;top:748.1px;font-size:13.5px;line-height:13.5px;color:#111;">m</div>
<div class="t" style="left:1115.5px;top:822.6px;font-size:13.5px;line-height:13.5px;color:#111;">-0.02</div>
<div class="t" style="left:1261.5px;top:830.6px;font-size:13.5px;line-height:13.5px;color:#111;">-0.02</div>
<div class="t" style="left:1401.0px;top:776.6px;font-size:13.5px;line-height:13.5px;color:#111;">-0.01</div>
<div class="t" style="left:1543.0px;top:724.6px;font-size:13.5px;line-height:13.5px;color:#111;">0</div>
<div class="t" style="left:1570.5px;top:757.6px;font-size:13.5px;line-height:13.5px;color:#111;">m</div>
<div class="t" style="left:1669.0px;top:674.6px;font-size:13.5px;line-height:13.5px;color:#111;">0.01</div>
<div class="t" style="left:1796.0px;top:625.6px;font-size:13.5px;line-height:13.5px;color:#111;">0.02</div>
<svg class="s" style="left:0px;top:2px;" width="1902" height="1000" viewBox="0 0 1902 1000"><path d="M856.5,917 L856.5,897" stroke="#4a86c0" stroke-width="1.5"/><path d="M856.5,893 L853.5,900 L859.5,900 Z" fill="#4a86c0"/><path d="M857,917 L875,911" stroke="#e0305a" stroke-width="1.5"/><path d="M880,909.5 L873,908 L874.5,914 Z" fill="#e0305a"/><path d="M856,917 L844,912" stroke="#40a040" stroke-width="1.5"/><path d="M840,910.5 L846,909 L845,914 Z" fill="#40a040"/></svg>
<div class="t" style="left:851.5px;top:877.4px;font-size:12.5px;line-height:12.5px;color:#111;">z</div>
<div class="t" style="left:831.5px;top:902.4px;font-size:12.5px;line-height:12.5px;color:#111;">y</div>
<div class="t" style="left:884.5px;top:901.7px;font-size:12.5px;line-height:12.5px;color:#111;">x</div>
<div class="r" style="left:812.5px;top:970.0px;width:1087.0px;height:78.0px;background:#f9fafe;border-radius:6px 6px 0 0"></div>
<div class="t" style="left:825.0px;top:978.6px;font-size:13px;line-height:13px;color:#2c5ea8;">Messages</div>
<div class="t" style="left:930.5px;top:978.6px;font-size:13px;line-height:13px;color:#333;">Progress</div>
<div class="t" style="left:1009.8px;top:978.6px;font-size:13px;line-height:13px;color:#333;">Log</div>
<div class="t" style="left:1059.0px;top:978.6px;font-size:13px;line-height:13px;color:#333;">Chatbot</div>
<div class="r" style="left:812.5px;top:1000.5px;width:1087.0px;height:1.2px;background:#dcdcdc"></div>
<div class="r" style="left:820.3px;top:998.0px;width:87.3px;height:2.5px;background:#2f86cc"></div>
<svg class="s" style="left:0px;top:0px;" width="1902" height="1076" viewBox="0 0 1902 1076"><path d="M1857,982 L1866,982 L1861.5,986.5 Z" fill="#b0b0b0"/><rect x="1871.5" y="979.5" width="8.5" height="7.5" fill="none" stroke="#b0b0b0" stroke-width="1.5"/><rect x="1888" y="978.5" width="5" height="6.5" fill="#b0b0b0"/><rect x="1886" y="985" width="9" height="1.3" fill="#b0b0b0"/><rect x="1890" y="985" width="1.3" height="4" fill="#b0b0b0"/><path d="M892.5,982 L899.5,989 M899.5,982 L892.5,989" stroke="#999" stroke-width="1"/><path d="M1113.5,982 L1120.5,989 M1120.5,982 L1113.5,989" stroke="#999" stroke-width="1"/><path d="M825,1006 L829,1016" stroke="#444" stroke-width="1.2"/><path d="M826,1015 L832,1013 L834,1020 L828,1021 Z" fill="#e8a030"/><rect x="841.5" y="1003" width="19" height="19" rx="2" fill="#cce4f7" stroke="#9fc9ec" stroke-width="0.8"/><rect x="844.5" y="1007.5" width="12" height="10" fill="#fff" stroke="#2f86cc" stroke-width="1"/><path d="M847,1010 L853,1014.5 L859,1010 M847,1010 L859,1010 L859,1019 L847,1019 Z" fill="#fff" stroke="#2f86cc" stroke-width="1"/></svg>
<div class="r" style="left:817.0px;top:1026.0px;width:1078.5px;height:17.5px;background:#fdfdfd;border:1px solid #d6d6d6"></div>
<div class="t" style="left:1224.5px;top:1059.0px;font-size:12px;line-height:12px;color:#1b1b1b;letter-spacing:-0.55px">1.65 GB | 1.84 GB</div>
</body></html>
